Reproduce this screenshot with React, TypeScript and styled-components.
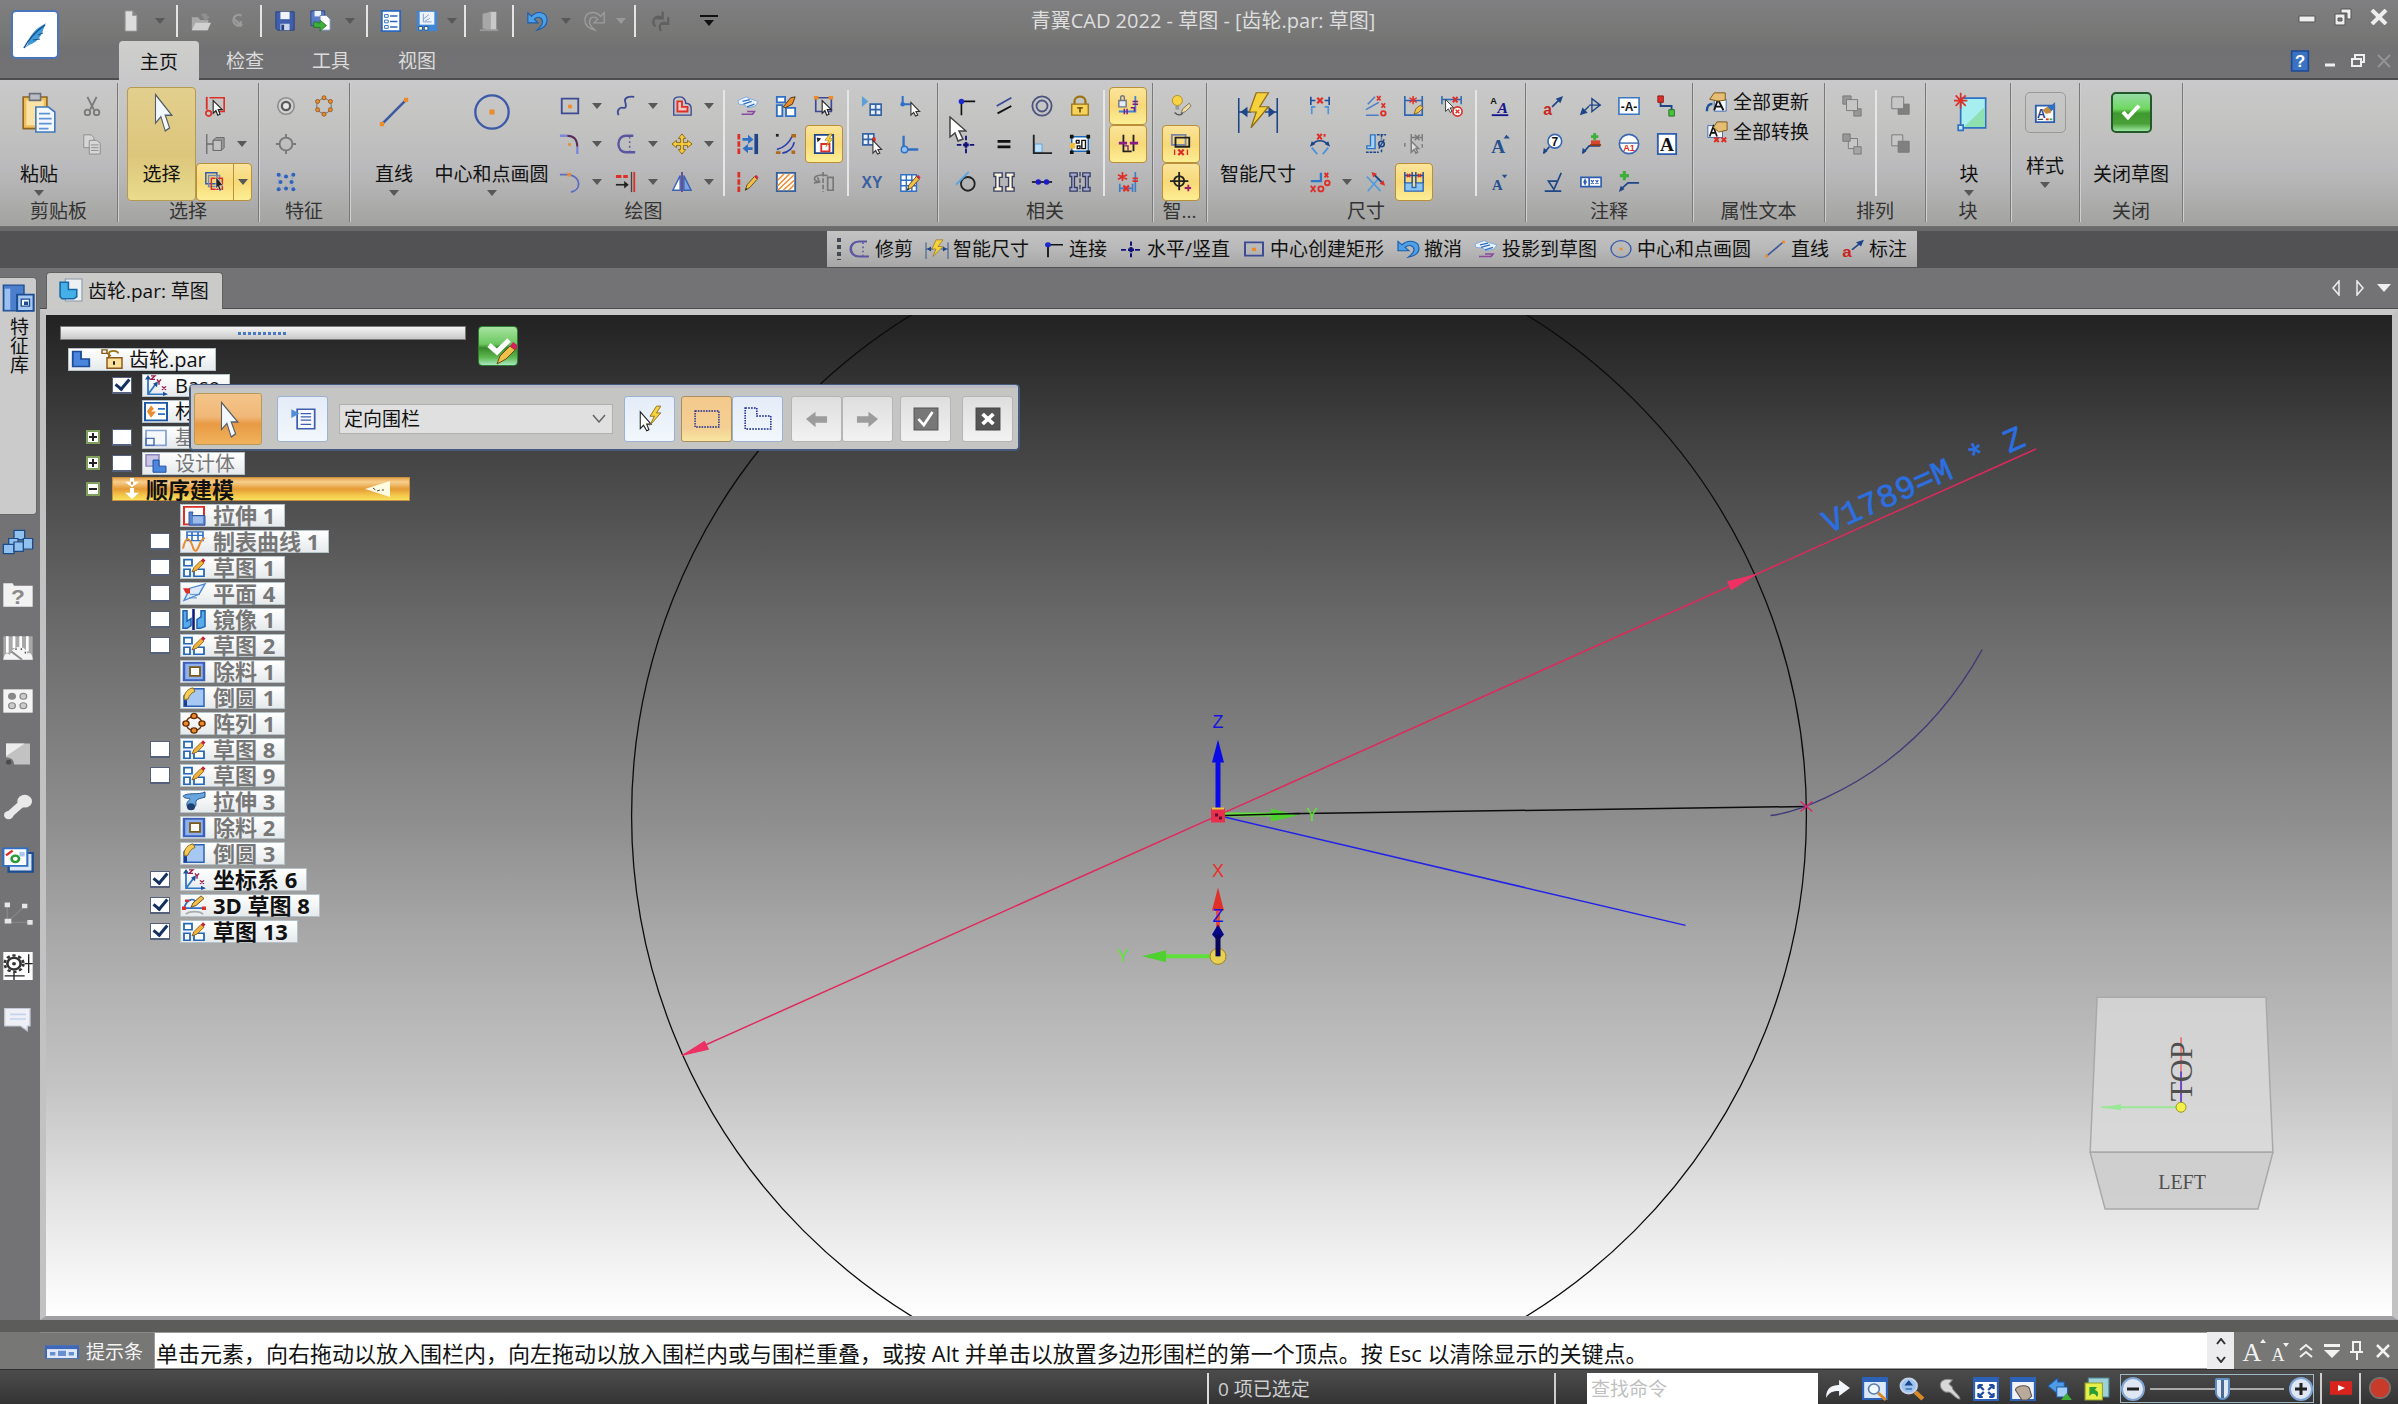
import React, { ReactNode } from 'react';
import styled, { createGlobalStyle, css } from 'styled-components';

const NAVY = '#1d4587';
const BLUE = '#2f6fc4';
const RED = '#dd2f28';
const INK = '#3d4a94';
const ORANGE = '#ec8b2c';

const GlobalStyle = createGlobalStyle`
  * { box-sizing: border-box; }
  html, body { margin: 0; padding: 0; }
  body {
    background: #333;
    font-family: "Open Sans", "Noto Sans CJK SC", sans-serif;
    font-size: 19px;
    line-height: 24px;
    color: #111;
  }
  button, input, select { font: inherit; color: inherit; }
  button { margin: 0; padding: 0; border: 0; background: none; cursor: default; }
`;

/* ---------- icons (24 x 24 grid) ---------- */

const pencil = (
  <g>
    <path d="M9 21l2-6 8-9 3 3-8 9z" fill="#f0c04a" stroke="#6b4a12" strokeWidth="1" />
    <path d="M19 6l3 3 1.500-2-2.500-3z" fill="#d2234a" />
    <path d="M9 21l.8-2.500 1.700 1.200z" fill="#222" />
  </g>
);
const cursor = <path d="M10 6v14l3-3 2 5 2.500-1-2-5h4.500z" fill="#fff" stroke="#222" strokeWidth="1.200" />;
const sketch = (
  <g>
    <path d="M2 3h8v7H2zM2 14h6v8H2zM12 14h10v8H12z" fill="#fff" stroke="#2468b8" strokeWidth="1.800" />
    <path d="M10 17l2-5 7-8 3 3-7 8z" fill="#f0b43a" stroke="#7a4b10" strokeWidth=".8" />
    <path d="M19 4l2-2.500 2.500 2.500-2 2.500z" fill="#c8202e" />
  </g>
);
const txt = (x: number, y: number, s: string, fill: string, size: number, serif = false) => (
  <text x={x} y={y} fill={fill} fontSize={size} fontWeight={700} textAnchor="middle" fontFamily={serif ? '"Liberation Serif", serif' : '"Liberation Sans", sans-serif'}>{s}</text>
);

const glyphs: Record<string, ReactNode> = {
  page: <path d="M5 1h9l5 5v17H5zM14 1v5h5" fill="#dcdcdc" stroke="#9a9a9a" />,
  open: <g><path d="M2 8h7l2 3h9v11H2z" fill="#a9a9a9" /><path d="M2 22l4-8h17l-4 8z" fill="#d0d0d0" /><path d="M12 6c2-4 7-3 7 1h3l-5 5-4-5h3" fill="#909090" /></g>,
  sync: <path d="M18 5a7 7 0 1 0 1 11M9 10l8 8M17 12v6h-6" fill="none" stroke="#9b9b9b" strokeWidth="3" />,
  save: <g><path d="M2 2h20v20H4l-2-2z" fill="#3f5fae" stroke="#26407f" /><path d="M7 2h10v8H7z" fill="#f1f4fa" /><path d="M7 15h10v7H7z" fill="#c9d3ea" /><path d="M8 16h3v6H8z" fill="#26407f" /></g>,
  saveAs: <g><path d="M1 1h15v16H1z" fill="#5a7cc8" stroke="#2c4688" /><path d="M5 1h7v6H5z" fill="#eef2fa" /><path d="M11 6h7l4 4v12H11z" fill="#fff" stroke="#6a86b8" /><path d="M4 13v6h7v4l7-6-7-6v3H8v-1z" fill="#3fae3a" stroke="#1c6e1c" strokeWidth=".8" /></g>,
  list: <g><path d="M2 1h20v22H2z" fill="#fff" stroke="#2a67bd" strokeWidth="2" /><path d="M5 5h4v3H5zM5 11h4v3H5zM5 17h4v3H5z" fill="none" stroke="#2a67bd" /><path d="M11 6.500h8M11 12.500h8M11 18.500h8" stroke="#2a67bd" strokeWidth="1.800" /></g>,
  image: <g><path d="M1 1h22v22H1z" fill="#3f86d8" /><path d="M4 2h16v14H4z" fill="#eef3fa" /><path d="M8 4v9h9M8 10l6-5M10 12l5-3" stroke="#7d9cc8" fill="none" /><path d="M3 18h4v4H3zM9 18h4v4H9z" fill="#fff8c0" stroke="#1c4c92" /></g>,
  door: <g><path d="M12 2h8v20h-8z" fill="#c9c9c9" /><path d="M5 4l9-2v21l-9-3z" fill="#a7a7a7" /><path d="M2 22h20" stroke="#999" strokeWidth="2" /></g>,
  undo: <path d="M2 3v11h11L9 10c4-4 9-2 9 3 0 4-3 6-6 9 8-2 11-6 11-11C23 2 12 0 6 7z" fill="#4ea0e6" stroke="#1a5dab" strokeWidth="1.200" />,
  redo: <path d="M22 3v11H11l4-4c-4-4-9-2-9 3 0 4 3 6 6 9C4 20 1 16 1 11 1 2 12 0 18 7z" fill="none" stroke="#9c9c9c" strokeWidth="1.500" />,
  redoAll: <path d="M16 2v7H9M16 9C8 4 3 12 8 18M22 8v7h-7M22 15c-8-3-11 2-8 8" fill="none" stroke="#606060" strokeWidth="2.500" />,
  help: <g><path d="M2 0h20v24H2z" fill="#3b73c4" stroke="#1d4a92" strokeWidth="2" />{txt(12, 19, '?', '#fff', 20)}</g>,

  paste: <g><path d="M2 3h15v19H2z" fill="#f0bd58" stroke="#8a6420" /><path d="M4 5h11v15H4z" fill="#fbe3a6" /><path d="M6 1h7v4H6z" fill="#b9bec6" stroke="#6c7078" /><path d="M10 9h8l4 3v12H10z" fill="#f3f8ff" stroke="#3f78bd" /><path d="M12 13h7M12 16h8M12 19h8M12 22h6" stroke="#5c94d6" /></g>,
  cut: <g fill="none" stroke="#7a7a7a" strokeWidth="2"><path d="M7 2l7 14M17 2l-7 14" /><circle cx="7" cy="19" r="3" /><circle cx="17" cy="19" r="3" /></g>,
  copy: <g fill="#d6d6d6" stroke="#8a8a8a"><path d="M3 2h8l3 3v11H3z" /><path d="M9 8h8l4 3v12H9z" /><path d="M11 13h8M11 16h8M11 19h8" /></g>,
  pointer: <path d="M6 1v18l5-4 4 9 4-2-4-8h6z" fill="#f2f8fd" stroke="#555e68" strokeWidth="1" />,
  selBox: <g><path d="M6 3h16v15H10" fill="none" stroke={RED} strokeWidth="1.800" /><path d="M3 2v14" stroke={RED} strokeWidth="2" /><circle cx="5" cy="20" r="3" fill="none" stroke={RED} strokeWidth="1.800" />{cursor}</g>,
  selPlane: <g><path d="M3 1v22M3 12h8" stroke="#6f6f6f" strokeWidth="1.500" /><path d="M10 8l3-3h9v11l-3 3h-9z" fill="#9a9a9a" stroke="#666" /><path d="M10 8h9v11h-9z" fill="#c2c2c2" stroke="#666" /></g>,
  selStack: <g fill="none" strokeWidth="1.600"><path d="M2 2h12v12H2z" stroke="#2c5faf" /><path d="M5 5h12v12H5z" stroke="#7a8bb0" /><path d="M8 8h12v12H8z" stroke={RED} /><path d="M13 6v14l2-3 2 5 2-1-2-5h4z" fill="#222" stroke="#fff" strokeWidth=".6" /></g>,
  hole: <g fill="none"><circle cx="12" cy="12" r="9" stroke="#8e8e8e" strokeWidth="1.800" fill="#d2d2d2" /><circle cx="12" cy="12" r="4.500" stroke="#5a5a5a" strokeWidth="2.500" fill="#e6e6e6" /></g>,
  ringDots: <g fill={ORANGE} stroke="#8a4a10" strokeWidth=".8"><circle cx="12" cy="12" r="8" fill="none" stroke="#555" />{[[12, 3], [19, 7], [19, 16], [12, 21], [5, 16], [5, 7]].map(([x, y]) => <circle key={`${x}-${y}`} cx={x} cy={y} r="2.200" />)}</g>,
  ring: <g fill="none" stroke="#777" strokeWidth="2"><circle cx="12" cy="12" r="7" /><path d="M12 1v4M12 19v4M1 12h4M19 12h4" /></g>,
  gridDots: <g fill="#2f63bd"><path d="M5 5l-2 7 2 6 7 1 6-1 2-6-2-7-6 3z" fill="none" stroke="#7ba0d8" strokeDasharray="2 2" />{[[4, 4], [12, 6], [20, 4], [6, 12], [18, 12], [4, 20], [12, 19], [20, 20]].map(([x, y]) => <circle key={`${x}-${y}`} cx={x} cy={y} r="2.200" />)}</g>,

  line: <g><path d="M4 20L20 4" stroke="#3d5a9e" strokeWidth="1.800" /><path d="M2 19h3v3H2zM19 2h3v3h-3z" fill={ORANGE} /></g>,
  circle: <g><circle cx="12" cy="12" r="10" fill="none" stroke="#3c5aa8" strokeWidth="1.400" /><path d="M10.500 10.500h3v3h-3z" fill={ORANGE} /></g>,
  rect: <g><path d="M3 4h18v16H3z" fill="none" stroke={INK} strokeWidth="2" /><path d="M10 10.500h4v4h-4z" fill={ORANGE} /></g>,
  curve: <path d="M4 22c-3-6 2-9 5-8 4 1 3-4 2-7-1-4 4-6 10-5" fill="none" stroke={INK} strokeWidth="2" />,
  offset: <g><path d="M3 22V6c0-3 3-4 7-4s6 4 6 7c5 0 6 3 6 6v7z" fill="none" stroke={INK} strokeWidth="1.500" /><path d="M7 18V7h5v6h6v5z" fill="#f6c6c0" stroke={RED} strokeWidth="2" /></g>,
  fillet: <g fill="none"><path d="M1 3h8M20 15v8" stroke="#7c86d8" strokeWidth="2.500" /><path d="M9 3c7 0 11 4 11 12" stroke="#5a2a58" strokeWidth="2" /><path d="M10 11h3v3h-3z" fill={ORANGE} /></g>,
  trim: <g fill="none" stroke="#5a57a0" strokeWidth="2.600"><path d="M20 3h-8C1 3 1 21 12 21h10" /><path d="M16 4v16" strokeDasharray="2 3" strokeWidth="1.600" /></g>,
  move: <path d="M12 1l4 5h-2.500v4.500H18V8l5 4-5 4v-2.500h-4.500V18H16l-4 5-4-5h2.500v-4.500H6V16l-5-4 5-4v2.500h4.500V6H8z" fill="#f7cf3e" stroke="#8a6414" />,
  arc: <g fill="none"><path d="M1 4h10M11 4c14 3 13 17 2 19" stroke="#5c6cc0" strokeWidth="2" /><path d="M9 2h4v4H9z" fill={ORANGE} /></g>,
  extend: <g><path d="M1 6h6M9 6h5" stroke={RED} strokeWidth="3.500" /><path d="M1 15h11" stroke="#222" strokeWidth="1.800" /><path d="M10 11l5 4-5 4z" fill="#222" /><path d="M18 1v22" stroke="#444" strokeWidth="1.500" /><path d="M21 1v22" stroke={RED} strokeWidth="2" /></g>,
  mirror: <g><path d="M2 21L10 5v16z" fill="#fff" stroke="#3961b4" strokeWidth="1.500" /><path d="M22 21L14 5v16z" fill="#7ca2e0" stroke="#3961b4" strokeWidth="1.500" /><path d="M12 1v22" stroke="#5a3a90" strokeWidth="1.800" /></g>,

  project: <g><path d="M1 6l9-4 4 2 9 3-3 5-8 2-3-3-7-1z" fill="#eaf3fd" stroke="#7ea8d8" /><path d="M6 7l8-2M7 10l9-3M11 13l8-3" stroke={BLUE} strokeWidth="1.400" /><path d="M5 21h12l2-3h-8" fill="none" stroke="#8a4aa0" strokeWidth="1.800" /></g>,
  include: <g><path d="M2 2h9v6H2zM2 11h6v12H2zM12 14h10v9H12z" fill="#fff" stroke={BLUE} strokeWidth="2" /><path d="M9 13l8-10 5-1-3 8-8 4z" fill={ORANGE} stroke="#4a3010" /></g>,
  selSketch: <g><path d="M3 3h17v15H3z" fill="none" stroke={INK} strokeWidth="1.800" /><path d="M1 1h5v4H1zM17 1h5v4h-5z" fill={ORANGE} />{cursor}</g>,
  stretch: <g><path d="M2 1v22" stroke={RED} strokeWidth="3" strokeDasharray="6 2" /><path d="M21 1v22" stroke={NAVY} strokeWidth="4" /><path d="M6 7h9M17 17H9" stroke={BLUE} strokeWidth="3" /><path d="M12 2l6 5-6 5zM12 12l-6 5 6 5z" fill={BLUE} /></g>,
  morph: <g fill="none" stroke="#2a3fae" strokeWidth="1.800"><path d="M2 18C10 16 16 10 19 3M8 22c7-1 12-6 13-12" /><path d="M1 1h3v3H1z" fill="#222" stroke="none" /><path d="M18 1h5v4h-5zM1 20h5v3H1zM18 19h4v4h-4z" fill="#b06a18" stroke="none" /></g>,
  relBox: <g><path d="M2 2h20v20H2z" fill="#fff" stroke={NAVY} strokeWidth="2" /><path d="M4 5l5 1-4 4z" fill="#222" /><path d="M9 12h9v8H9z" fill="none" stroke={RED} strokeWidth="2" /><path d="M18 1l-5 7h4l-3 7 8-9h-4l3-5z" fill="#f5d23c" stroke="#8a6a1a" strokeWidth=".6" /></g>,
  dashEdit: <g><path d="M2 1v22" stroke={RED} strokeWidth="3" strokeDasharray="6 2" />{pencil}</g>,
  hatch: <g><path d="M2 2h20v20H2z" fill="#fff" stroke="#355f9c" strokeWidth="2" /><path d="M3 10l7-7M3 16L16 3M3 21L21 4M9 21L21 10M15 21l6-6" stroke={ORANGE} strokeWidth="1.600" /></g>,
  rotateGray: <g fill="none" stroke="#777" strokeWidth="1.800"><path d="M11 1v22" strokeDasharray="5 2" /><path d="M8 12c-6 0-8-4-5-6s8-2 13-1M1 13l6-1-2-5" /><path d="M16 7h6v14h-6z" /></g>,
  gridPlay: <g><path d="M1 1l7 6-7 6z" fill="#5c9ed8" /><path d="M10 10h12v12H10zM16 10v12M10 16h12" fill="#eaf1fb" stroke="#3464a6" strokeWidth="1.800" /></g>,
  originPick: <g><path d="M4 1v9h10" fill="none" stroke={BLUE} strokeWidth="2.200" /><circle cx="4" cy="10" r="2.500" fill={BLUE} /><path d="M13 8v14l3-3 2 4 2.500-1-2-4h4z" fill="#fff" stroke="#333" strokeWidth="1.200" /></g>,
  gridPick: <g><path d="M2 1h12v12H2zM8 1v12M2 7h12" fill="#eaf1fb" stroke="#3464a6" strokeWidth="1.800" /><path d="M12 5h4v4h-4z" fill={RED} /><path d="M13 8v14l3-3 2 4 2.500-1-2-4h4z" fill="#fff" stroke="#333" strokeWidth="1.200" /></g>,
  origin: <g><path d="M5 3v15h16" fill="none" stroke={BLUE} strokeWidth="2.500" /><circle cx="6" cy="18" r="3.500" fill="#8ec3f3" stroke={BLUE} strokeWidth="1.500" /></g>,
  xy: txt(12, 18, 'XY', '#3a5ea2', 17),
  gridEdit: <g><path d="M2 4h17v18H2zM8 4v18M14 4v18M2 10h17M2 16h17" fill="#fff" stroke={BLUE} strokeWidth="1.600" />{pencil}</g>,

  connect: <g><path d="M7 22V7h15" fill="none" stroke="#111" strokeWidth="1.800" /><circle cx="7" cy="7" r="3" fill="#1a2acb" /></g>,
  parallel: <g><path d="M4 12L20 3" stroke={INK} strokeWidth="2" /><path d="M5 20l15-8" stroke="#111" strokeWidth="2" /></g>,
  concentric: <g fill="none" stroke="#4e5480" strokeWidth="2"><circle cx="12" cy="12" r="10.500" /><circle cx="12" cy="12" r="6" /></g>,
  lock: <g><path d="M6 11V7c0-7 12-7 12 0v4" fill="none" stroke="#9a7414" strokeWidth="2.500" /><path d="M3 10h18v12H3z" fill="#f6d45a" stroke="#9a7414" strokeWidth="1.500" /><path d="M9 14h6M12 14v5" stroke="#7a5a10" strokeWidth="2" /></g>,
  horiz: <g stroke="#10107a" strokeWidth="2"><path d="M12 3v20" strokeDasharray="5 2" /><path d="M2 13h20" strokeDasharray="5 2" /><path d="M9 13h6M12 10v6" strokeWidth="3" /></g>,
  equal: <path d="M5 9h14M5 15h14" stroke="#111" strokeWidth="3" />,
  perp: <g><path d="M4 12h8v9H4z" fill="#bfe0fa" stroke="#53a0e0" /><path d="M3 2v20h20" fill="none" stroke="#222" strokeWidth="2" /></g>,
  rigid: <g><path d="M3 4h18v16H3z" fill="#fff" stroke="#1a6ab8" strokeWidth="1.600" /><path d="M1 2h4v4H1zM19 2h4v4h-4zM1 19h4v4H1zM19 19h4v4h-4z" fill="#111" /><path d="M14 8h4v9h-4zM8 8h3v3H8zM9 14h3v3H9z" fill="none" stroke="#111" strokeWidth="1.500" /><path d="M1 11h6v6H1z" fill="#f0be3a" /></g>,
  tangent: <g><circle cx="14" cy="14" r="7.500" fill="none" stroke="#222" strokeWidth="2" /><path d="M1 15L15 1" stroke="#58a6e6" strokeWidth="2" /></g>,
  symm: <g fill="#fff6dc" stroke="#333c62" strokeWidth="1.500"><path d="M1 2h9v5H7v10h3v5H1V18h2V6H1z" /><path d="M23 2h-9v5h3v10h-3v5h9v-4h-2V6h2z" /></g>,
  collinear: <g><path d="M1 12h22" stroke="#111" strokeWidth="1.800" /><circle cx="8" cy="12" r="3" fill="#1a1acb" /><circle cx="17" cy="12" r="3" fill="#1a1acb" /></g>,
  symmAxis: <g fill="#a9acd0" stroke="#333c62" strokeWidth="1.400"><path d="M1 2h8v4H6v12h3v4H1v-4h2V6H1z" /><path d="M23 2h-8v4h3v12h-3v4h8v-4h-2V6h2z" /><path d="M12 1v22" strokeDasharray="5 2" /></g>,
  keepRel: <g><path d="M2 6h8v7H2z" fill="#e6edf8" stroke="#6b7686" strokeWidth="1.500" /><path d="M4 6V3c0-3 4-3 4 0v3" fill="none" stroke="#6b7686" strokeWidth="1.500" /><path d="M20 1v17H2" fill="none" stroke="#3f86d6" strokeWidth="2" /><path d="M17 7h6M17 10h6M8 15v6M11 15v6M15 14h4v4" fill="none" stroke="#7a1a8a" strokeWidth="1.600" /></g>,
  handles: <g fill="none"><path d="M7 2v18h9M18 2v18" stroke="#222" strokeWidth="2" /><path d="M2 11h9M14 11h9" stroke="#8a1a8a" strokeWidth="3" /><path d="M8 14h4v5" stroke="#7a1a8a" strokeWidth="1.500" /></g>,
  conflict: <g><path d="M20 1v22M3 14v9M17 14v9M3 19h14" stroke="#3f7cc8" strokeWidth="1.800" /><path d="M6 1v10M1 4l10 5M1 9l10-5M17 8h6M17 11h6" stroke={RED} strokeWidth="1.800" /><path d="M7 16l6 6M13 16l-6 6" stroke={RED} strokeWidth="2.500" /></g>,

  bulbEdit: <g><circle cx="8" cy="6" r="5.500" fill="#f8d348" stroke="#b28a1a" /><path d="M6 12h4v4H6z" fill="#999" /><path d="M5 19c4 4 8 3 9 0" fill="none" stroke="#555" strokeWidth="1.500" /><path d="M12 20l2-5 7-6 2 3-6 6z" fill="#f6dc9a" stroke="#555" strokeWidth=".8" /></g>,
  overlap: <g fill="none" strokeWidth="2"><path d="M2 2h15v11H2z" stroke="#7b85a8" /><path d="M6 5h15v10H6z" stroke="#222" /><path d="M5 18v6M19 18v6" stroke={RED} strokeWidth="1.500" /><path d="M9 18l6 6M15 18l-6 6" stroke={RED} strokeWidth="2.500" /></g>,
  target: <g fill="none" stroke="#222" strokeWidth="2"><circle cx="10" cy="11" r="5.500" /><path d="M10 1v20M0 11h20" /><path d="M20 15v7M16 18.500h7" stroke="#a01a6a" /></g>,

  smartDim: <g><path d="M1 4v20M23 4v20M1 12h7M16 12h7" stroke={NAVY} strokeWidth=".9" fill="none" /><path d="M2 12l4-3v6zM22 12l-4-3v6z" fill={NAVY} /><path d="M11 1L7 12h4l-3 9 10-12h-5l5-8z" fill="#f5d23c" stroke="#8f6c14" strokeWidth=".7" /></g>,
  hdim: <g><path d="M2 2v9M22 2v9M2 6h5M17 6h5" stroke="#1f4f9a" strokeWidth="1.800" /><path d="M3 21v-8h4M21 21v-8h-4" fill="none" stroke="#4d94da" strokeWidth="1.800" /><path d="M9 3l6 6M15 3L9 9" stroke={RED} strokeWidth="2.500" /></g>,
  adim: <g><path d="M9 1l5 6M14 1L9 7M17 1v3" stroke={RED} strokeWidth="2.200" /><path d="M3 13C8 7 16 7 21 13" fill="none" stroke={NAVY} strokeWidth="1.800" /><path d="M1 15l2-6 4 3zM23 15l-2-6-4 3z" fill={NAVY} /><path d="M3 16l6 7M21 16l-6 7" stroke="#4d94da" strokeWidth="2" /></g>,
  coord: <g><path d="M2 11h11V2" fill="none" stroke="#2f78c8" strokeWidth="2.500" /><path d="M17 2l4 5M21 2l-4 5M2 16l5 7M7 16l-5 7" stroke={RED} strokeWidth="2" /><circle cx="20" cy="13" r="2.500" fill="none" stroke={RED} strokeWidth="2" /><circle cx="13" cy="19.500" r="2.800" fill="none" stroke={RED} strokeWidth="2" /></g>,
  multi: <g><path d="M1 22h14M1 16L15 8M3 10l8-8" stroke="#4a7ec4" strokeWidth="1.600" /><path d="M13 1l4 5M17 1l-4 5M18 9l4 5M22 9l-4 5" stroke={RED} strokeWidth="1.800" /><circle cx="20" cy="20" r="2.500" fill="none" stroke={RED} strokeWidth="2" /></g>,
  depth: <g><path d="M2 17V14h4V2h5v15z" fill="#a5d2f6" stroke="#2f74be" strokeWidth="1.500" /><path d="M13 2h10M18 2v5M18 18v4M1 21h14" stroke={NAVY} strokeWidth="1.600" strokeDasharray="3 1" /><circle cx="18" cy="12" r="3" fill="none" stroke={NAVY} strokeWidth="1.800" /><path d="M15 17l6-10" stroke={NAVY} strokeWidth="1.500" /></g>,
  xdist: <g><path d="M2 6l15 16M3 22L15 8" stroke="#4f9be0" strokeWidth="1.800" /><path d="M9 3l11 11" stroke={NAVY} strokeWidth="2" /><path d="M7 1l6 2-4 4zM22 16l-6-2 4-4z" fill={RED} /></g>,
  dimEdit: <g><path d="M2 1v21h19V1M2 6h19" fill="none" stroke="#2c66b4" strokeWidth="1.800" /><path d="M11 1v9M7 3l8 5M7 8l8-5" stroke={RED} strokeWidth="1.600" /><path d="M12 21l2-6 5-4 3 3-5 5z" fill="#f0c04a" stroke="#6b4a12" strokeWidth=".8" /></g>,
  dimSel: <g stroke="#7c7c7c" fill="none" strokeWidth="1.600"><path d="M9 1v8M21 1v8M9 5h12M13 2l5 6M18 2l-5 6M2 11v4M21 12v4" /><path d="M9 9v12l3-3 2 4 2-1-2-4h3z" fill="#e0e0e0" /></g>,
  pane: <g><path d="M2 13h8v5h4v-5h8v9H2z" fill="#8cc4f2" stroke="#2c66b4" strokeWidth="1.500" /><path d="M2 1v12M10 1v12M14 1v12M22 1v12M2 5h20" stroke="#1f4f9a" strokeWidth="1.600" /><path d="M4 3l4 4M8 3L4 7M16 3l4 4M20 3l-4 4" stroke={RED} strokeWidth="1.400" /></g>,
  delDim: <g><path d="M1 1v9M22 1v9M1 5h21" stroke="#2c66b4" strokeWidth="1.600" /><path d="M13 2l5 6M18 2l-5 6" stroke={RED} strokeWidth="2.200" /><path d="M5 5v13l3-3 2 4 2-1-2-4h4z" fill="#fff" stroke="#333" /><circle cx="18" cy="18" r="5" fill="#fff" stroke={RED} strokeWidth="1.800" /><path d="M16 16l4 4M20 16l-4 4" stroke={RED} strokeWidth="1.500" /></g>,
  fontAA: <g>{txt(5, 10, 'A', '#111', 10)}<text x="15" y="20" fontSize="17" fontWeight="700" fontStyle="italic" textAnchor="middle" fill="#16168c" fontFamily='"Liberation Serif", serif'>A</text><path d="M3 22h18" stroke="#16168c" strokeWidth="2" /></g>,
  fontUp: <g>{txt(10, 22, 'A', '#24508f', 21, true)}<path d="M16 6l3-4 4 4z" fill="#24508f" /></g>,
  fontDown: <g>{txt(9, 21, 'A', '#24508f', 16, true)}<path d="M14 4h6l-3 4z" fill="#24508f" /></g>,

  leader: <g>{txt(6, 22, 'a', '#c8241c', 17)}<path d="M11 13l8-8" stroke={NAVY} strokeWidth="1.800" /><path d="M23 1l-3 8-5-5z" fill={NAVY} /></g>,
  weldSym: <g fill="none" stroke={NAVY} strokeWidth="1.500"><path d="M2 20l8-8M10 11h13M13 4v14l9-7z" /><path d="M1 21l2-6 4 4z" fill={NAVY} /></g>,
  datum: <g><path d="M1 3h22v18H1z" fill="#fff" stroke="#3a78c4" strokeWidth="1.800" />{txt(12, 17, '-A-', '#111', 13)}</g>,
  connector: <g><path d="M5 5v7h12v8" fill="none" stroke={NAVY} strokeWidth="2" /><path d="M2 1h6v7H2z" fill={RED} stroke="#8a1a14" /><path d="M14 16h6v7h-6z" fill="#4ac43e" stroke="#1c6e1c" /></g>,
  balloon: <g><path d="M8 15l-6 7" stroke={NAVY} strokeWidth="1.800" /><path d="M1 23l1-7 4 4z" fill={NAVY} /><circle cx="14" cy="9" r="7.500" fill="#fff" stroke="#3a68b4" strokeWidth="1.800" />{txt(14, 14, '7', '#111', 13)}</g>,
  edgeCond: <g><path d="M3 22l7-8h12" fill="none" stroke={NAVY} strokeWidth="1.800" /><path d="M2 23l1-7 4 4z" fill={NAVY} /><path d="M12 8h10v5H12z" fill="#d8442c" /><path d="M11 13h12" stroke="#9a3a1a" strokeWidth="2" /><path d="M16 0v8M12 4h8" stroke="#3fae3a" strokeWidth="3" /></g>,
  a1: <g><circle cx="12" cy="12" r="10.500" fill="#fff" stroke="#3a68b4" strokeWidth="1.800" /><path d="M2 11h20" stroke="#3a68b4" strokeWidth="1.500" />{txt(12, 20, 'A1', RED, 10)}</g>,
  textA: <g><path d="M2 1h20v22H2z" fill="#fff" stroke="#2c5daf" strokeWidth="2" />{txt(12, 20, 'A', '#111', 21, true)}</g>,
  surface: <path d="M7 11h10l-4 9zM13 20l8-18M3 22h18" fill="none" stroke={NAVY} strokeWidth="1.800" />,
  fcf: <g><path d="M1 7h22v10H1zM10 7v10" fill="#fff" stroke="#2c5daf" strokeWidth="1.800" /><path d="M5.500 8l2 4-2 4-2-4z" fill="#2c5daf" /><path d="M12 10l3 4M15 10l-3 4M17 10l3 4M20 10l-3 4" stroke="#2c5daf" strokeWidth="1.300" /></g>,
  callout: <g><path d="M3 20l8-7h12" fill="none" stroke={NAVY} strokeWidth="1.800" /><path d="M1 23l2-7 4 4z" fill={NAVY} /><path d="M7 0v10M2 5h10" stroke="#3fae3a" strokeWidth="3.500" /></g>,
  updAll: <g><path d="M9 9h13v13H9z" fill="#f4f7fb" stroke="#3a68b4" /><path d="M9 21l4-12 6 12M11 17h6" fill="none" stroke="#111" strokeWidth="2" /><path d="M4 9l5-7h12v8l-8 1z" fill="#e6bd74" stroke="#7a5212" /><path d="M1 22c0-6 2-8 6-8" fill="none" stroke="#1f4f9a" strokeWidth="2.500" /></g>,
  cvtAll: <g><path d="M2 5h16v13H2z" fill="#f4f7fb" stroke="#3a68b4" /><path d="M4 17L8 6l4 11M6 13h5" fill="none" stroke="#111" strokeWidth="1.800" /><path d="M8 7l4-6h11v9l-9 2z" fill="#e6bd74" stroke="#7a5212" /><path d="M9 18l5 5M14 18l-5 5M17 18l5 5M22 18l-5 5" stroke={RED} strokeWidth="2.200" /></g>,
  front: <g fill="#c6c6c6" stroke="#777"><path d="M2 1h9v9H2z" fill="#979797" /><path d="M14 15h8v8h-8z" fill="#979797" /><path d="M6 5h12v12H6z" /></g>,
  forward: <g fill="#c6c6c6" stroke="#777"><path d="M10 10h12v11H10z" fill="#808080" /><path d="M3 2h13v13H3z" /></g>,
  back: <g fill="#c6c6c6" stroke="#777"><path d="M8 6h10v11H8z" /><path d="M2 1h8v8H2z" fill="#979797" /><path d="M14 15h8v8h-8z" fill="#a5a5a5" /></g>,
  backward: <g fill="#c6c6c6" stroke="#777"><path d="M3 2h12v12H3z" /><path d="M10 9h12v12H10z" fill="#808080" /></g>,
  block: <g><path d="M7 4h15v17H7z" fill="#a6eef0" stroke={BLUE} /><path d="M21.500 9v11.500H9z" fill="#8fe0b0" /><path d="M5.500 19.500h3v3h-3z" fill="#bfe6ff" stroke={BLUE} /><path d="M7 1v9M3 5.500h8M4 2.500l6 6M10 2.500l-6 6" stroke={RED} strokeWidth="1" /></g>,
  styles: <g><path d="M2 5h20v18H2z" fill="#fff" stroke="#2c5daf" strokeWidth="2" />{txt(8, 18, 'A', '#1d3f92', 13)}<path d="M4 20h6" stroke="#111" /><path d="M13 19h3v2h-3z" fill={RED} /><path d="M17 19h3v2h-3z" fill="#3fae3a" /><path d="M9 10l6-4 6 1-3 6-5 1z" fill="#c58a3a" /><path d="M14 5h5l4-4v7l-4 3z" fill="#2f6fc4" /></g>,
  check: <path d="M4 12l5 6L20 5" fill="none" stroke="#fff" strokeWidth="4" />,

  part: <g><path d="M7 1h16v21H7z" fill="#eef1f4" stroke="#8a98a8" /><path d="M2 4h8v7h8v7l-3 2H4l-2-2z" fill="#45b0e6" stroke="#1667a8" strokeWidth="1.500" /></g>,
  partSmall: <path d="M3 3h9v9h9v9H3z" fill="#4b86de" stroke="#1c4c9a" strokeWidth="2" />,
  lockKey: <g><path d="M2 1h5v4H2zM6 4l5 4" fill="none" stroke="#8a5a1c" strokeWidth="1.500" /><path d="M9 9V5c0-4 9-4 9 0" fill="none" stroke="#9a7414" strokeWidth="2" /><path d="M7 10h15v12H7z" fill="#fbe09a" stroke="#8a5a1c" strokeWidth="1.500" /><path d="M14 14v4" stroke="#222" strokeWidth="2" /></g>,
  axes: <g><path d="M4 2v20h18M4 22L12 10" fill="none" stroke="#2f78c8" strokeWidth="1.800" /><path d="M4 0l-3 5h6zM24 22l-5-3v5zM14 7l-5 3 4 4z" fill="#1f4f9a" /><path d="M7 1h4L7 5h4M13 5l2 3 2-3M15 8v3M18 13l4 4M22 13l-4 4" fill="none" stroke="#9a1a4a" strokeWidth="1.400" /></g>,
  material: <g><path d="M1 2h22v20H1z" fill="#fff" stroke="#1c5aa8" strokeWidth="2" /><path d="M7 5l3 4-3 3h5l-5 7-4-7z" fill={ORANGE} /><path d="M14 9h7M14 15h7" stroke={BLUE} strokeWidth="2" /></g>,
  plane: <g><path d="M2 4h20v17H2z" fill="#f5f8fc" stroke="#8aa4d0" strokeWidth="1.800" /><path d="M2 13h8v8H2z" fill="none" stroke="#4a6fb8" strokeWidth="1.500" /></g>,
  body: <g><path d="M2 2h13v13H2z" fill="#c9c6e8" stroke="#8a86b8" strokeWidth="1.500" /><path d="M9 8h6v7h7v7H9z" fill="#4b86de" stroke="#1c4c9a" /></g>,
  arrows: <g fill="#fff"><path d="M10 0h4v4h5l-7 6-7-6h5zM10 11h4v5h5l-7 7-7-7h5z" /><path d="M11 4h2v3h-2z" fill={ORANGE} /></g>,
  extrude: <g><path d="M2 2h20v20H2z" fill="#fff" stroke={RED} strokeWidth="2" /><path d="M7 8h4l-1 4h13v11H7z" fill="#5b86d0" stroke="#2c4f9c" /><path d="M11 13h10v8H11z" fill="#9dbcea" /></g>,
  tableCurve: <g><path d="M5 1h16v10H5zM5 5h16M10 1v10M16 1v10" fill="#fff" stroke={BLUE} strokeWidth="1.600" /><path d="M1 20C4 4 8 8 11 19c2 6 4 4 6-2s3-8 6-9" fill="none" stroke={ORANGE} strokeWidth="2" /></g>,
  sketch,
  refPlane: <g><path d="M2 20L8 6l15-5-6 12z" fill="#dceafa" stroke="#4f8ad0" strokeWidth="1.500" /><path d="M8 13h10M7 17h8" stroke="#4f8ad0" /><path d="M1 6h7v6H4z" fill={RED} /></g>,
  mirrorFeat: <g><path d="M1 2h4v12l4-3v8l-4 3H1zM15 12l4-3V2h4v18l-5 2h-3z" fill="#5aa9e8" stroke="#1c62b0" strokeWidth="1.500" /><path d="M11.500 0v24" stroke="#0a1a7a" strokeWidth="2.500" /></g>,
  cutFeat: <g><path d="M2 2h20v20H2z" fill="#8fb0ee" stroke="#3c5fb8" strokeWidth="2.500" /><path d="M8 7h10v10H8z" fill="#fff" stroke="#7a5a14" strokeWidth="1.800" /></g>,
  round: <g><path d="M2 22V10l8-8h12v20z" fill="#a7c8f2" stroke="#2f62b4" strokeWidth="1.500" /><path d="M2 14C2 6 6 2 11 1l2 4C9 7 7 10 6 14z" fill="#f6cc58" stroke="#8a6414" /><path d="M2 15h3v7H2z" fill="#1d3f92" /></g>,
  pattern: <g fill={ORANGE} stroke="#6a3008" strokeWidth="1.500"><circle cx="12" cy="12" r="8" fill="none" /><circle cx="12" cy="3.500" r="3" /><circle cx="20" cy="12" r="3" /><circle cx="12" cy="20" r="3" /><circle cx="4" cy="12" r="3" /></g>,
  revolve: <g><path d="M1 6c4-5 16-1 22-5v6c-6 2-10 2-9 8 0 5-8 8-9 2s4-7 3-8-6 0-7-3z" fill="#6aa6de" stroke="#1f4f8a" /><circle cx="9" cy="18" r="4" fill="#1d3f72" /></g>,
  sketch3d: <g><path d="M2 15C6 1 14 5 14 9M2 15h20" fill="none" stroke={BLUE} strokeWidth="1.800" /><path d="M4 22c3-4 14-4 17 0" fill="none" stroke="#aaa" strokeWidth="2" /><path d="M0 13h4v4H0zM20 13h4v4h-4zM3 5h4v3H3z" fill={RED} /><path d="M9 14l2-5 8-8 3 3-8 8z" fill="#f0c04a" stroke="#6b4a12" /></g>,

  featLib: <g><path d="M1 1h15v22H1z" fill="#4b7fcb" stroke="#1c4c92" /><path d="M2 4h4v18H2z" fill="#9cc0f0" /><path d="M11 9h12v14H11z" fill="#a5c8f2" stroke="#1c4c92" strokeWidth="1.500" /><path d="M14 13h6v6h-6z" fill="#fff" stroke="#1c4c92" /><path d="M16 15h3v3h-3z" fill="#1c4c92" /></g>,
  blocks: <g fill="#8fc0ee" stroke="#1c4c8a"><path d="M9 2h8v8H9z" /><path d="M16 9h7v9h-7z" /><path d="M5 9h7v8H5z" /><path d="M1 14h8v8H1z" /><path d="M9 12h7v8H9z" /></g>,
  ask: <g><path d="M1 2h7l1 2h14v18H1z" fill="#f2f2f2" />{txt(12, 20, '?', '#8a8a8a', 17)}</g>,
  scene: <g><path d="M1 2h22v20H1z" fill="#a8a8a8" /><path d="M4 2v14M9 2v10M14 2v10M19 2v13" stroke="#fff" strokeWidth="2" /><path d="M1 22c1-6 3-6 5-4 2-9 12-9 13-1 2-2 4 1 4 5z" fill="#f4f4f4" /><path d="M7 15l8 7" stroke="#8a8a8a" strokeWidth="1.500" /><path d="M10 13h1M14 13h1M17 16h1" stroke="#555" strokeWidth="1.500" /></g>,
  holes: <g><path d="M1 2h22v20H1z" fill="#f4f4f4" /><g fill="#ccc" stroke="#888"><circle cx="7.500" cy="8" r="2.500" fill="#888" /><circle cx="16" cy="8" r="2.500" /><circle cx="7.500" cy="16" r="2.500" /><circle cx="16" cy="16" r="2.500" /></g></g>,
  corner: <g><path d="M3 3h18v18H9c0-4-2-6-6-6z" fill="#c2c2c2" /><path d="M3 3h14L3 14z" fill="#ececec" /><circle cx="5" cy="19" r="2" fill="#4c4c4c" /></g>,
  joint: <g fill="#e9e9e9"><circle cx="17" cy="7" r="5.500" /><circle cx="5" cy="19" r="3.500" /><path d="M12 8L4 16l4 4 8-8z" /></g>,
  layers: <g><path d="M5 6h18v16H5z" fill="#dce8f6" stroke="#1c4c92" strokeWidth="1.800" /><path d="M1 2h18v15H1z" fill="#fff" stroke="#2f6fc4" strokeWidth="1.600" /><circle cx="10" cy="11" r="2.800" fill="none" stroke="#2a9a34" strokeWidth="2" /><path d="M3 8l5-4" stroke={RED} strokeWidth="1.800" /><path d="M13 5h4v4h-4z" fill="#a8caf0" /></g>,
  nodes: <g><path d="M4 4v16h17M4 20L17 6" fill="none" stroke="#858585" /><path d="M2 3h4v4H2zM15 4h4v4h-4zM2 17h5v4H2zM19 18h4v4h-4z" fill="#e6e6e6" /></g>,
  gear: <g><path d="M1 0h22v24H1z" fill="#fff" /><circle cx="9" cy="10" r="5" fill="none" stroke="#333" strokeWidth="2" /><circle cx="9" cy="10" r="1.500" fill="#333" /><circle cx="9" cy="10" r="7" fill="none" stroke="#333" strokeWidth="2" strokeDasharray="2.500 2" /><path d="M20 2v16M17 10h6M2 20.500h15M9 18v6" stroke="#222" /></g>,
  chat: <g><path d="M2 3h19v15h-2v4l-5-4H2z" fill="#eef0f6" stroke="#c2c8d8" /><path d="M6 8h12M6 12h12" stroke="#c4d2ee" strokeWidth="1.500" /></g>,

  form: <g><path d="M7 3h15v18H7z" fill="#f8faff" stroke="#3d5fb0" strokeWidth="1.500" /><path d="M10 7h9M10 10h9M10 13h9M10 17h9" stroke="#3d5fb0" strokeWidth="1.200" /><path d="M2 3l7 4-7 4z" fill="#4f8fd8" /></g>,
  pickBolt: <g><path d="M3 6v15l3-3 3 5 2-1-2-5h4z" fill="#fff" stroke="#222" /><path d="M18 1l-6 9h4l-4 8 10-11h-4l4-6z" fill="#f5d23c" stroke="#8a6a1a" strokeWidth=".8" /></g>,
  fenceRect: <path d="M1 4h22v16H1z" fill="none" stroke="#1a2a92" strokeWidth="1.300" strokeDasharray="1.500 1" />,
  fencePoly: <path d="M1 1h10v8h12v13H1z" fill="none" stroke="#1a2a92" strokeWidth="1.300" strokeDasharray="1.500 1" />,
  arrowL: <path d="M1 12l10-8v5h12v7H11v5z" fill="#9c9c9c" />,
  arrowR: <path d="M23 12L13 4v5H1v7h12v5z" fill="#9c9c9c" />,
  okBox: <g><path d="M1 1h22v22H1z" fill="#777" stroke="#555" /><path d="M5 12l5 6 8-13" fill="none" stroke="#fff" strokeWidth="2.500" /></g>,
  xBox: <g><path d="M1 1h22v22H1z" fill="#555" stroke="#444" /><path d="M7 7l10 10M17 7L7 17" stroke="#fff" strokeWidth="3.500" /></g>,

  hint: <g><path d="M0 1h24v22H0z" fill="#dfe8f8" stroke="#3f68b8" strokeWidth="1.500" /><path d="M0 1h24v6H0z" fill="#3f68b8" /><path d="M3 12h4v6H3zM9 10h6v9H9zM17 12h4v6h-4z" fill="#6a8fd0" /></g>,
  share: <path d="M1 21C1 11 6 8 13 8V3l10 8-10 8v-5c-6 0-9 1-12 7z" fill="#f2f6fb" />,
  zoomArea: <g><path d="M1 1h22v21H1z" fill="#dce9fa" stroke="#2c62b8" strokeWidth="2" /><path d="M1 1h22v4H1z" fill="#2c62b8" /><circle cx="11" cy="12" r="5" fill="#f2f8ff" stroke="#5a7ca8" strokeWidth="1.500" /><path d="M15 16l7 7" stroke="#d88a28" strokeWidth="3" /></g>,
  zoom: <g><circle cx="9" cy="9" r="7.500" fill="#9cc4f2" stroke="#c6d2e6" strokeWidth="2" /><path d="M9 4l3 4H6zM6 12h6" fill={NAVY} stroke={NAVY} /><path d="M15 15l7 7" stroke="#d88a28" strokeWidth="4" /></g>,
  zoomTool: <path d="M4 8c0-5 6-7 11-5l-3 4 3 3c-1 3 8 9 7 12-3 1-8-8-11-7S4 12 4 8z" fill="#d8d8d8" stroke="#888" />,
  fit: <g><path d="M1 1h22v22H1z" fill="#fff" stroke="#2c62b8" strokeWidth="2" /><path d="M1 1h22v4H1z" fill="#2c62b8" /><path d="M5 8h4M5 8v4M5 8l5 5M19 8h-4M19 8v4M19 8l-5 5M5 20h4M5 20v-4M5 20l5-5M19 20h-4M19 20v-4M19 20l-5-5" stroke="#1d4ba0" strokeWidth="2" /></g>,
  pan: <g><path d="M1 1h22v22H1z" fill="#f0f3f8" stroke="#2c62b8" strokeWidth="2" /><path d="M1 1h22v4H1z" fill="#2c62b8" /><path d="M5 13c1-5 12-6 13-1l2 7-4 4h-5z" fill="#b9aa9c" stroke="#5c5048" /></g>,
  viewCube: <g><path d="M1 9l9-8v4h6v8h-6v4z" fill="#4f9be6" stroke="#1c5aa8" /><path d="M9 10h10v10H9z" fill="#a3cdf6" stroke="#1c5aa8" /><path d="M18 16l5 7H13z" fill="#3fae3a" /></g>,
  refresh: <g><path d="M4 1h19v19H4z" fill="#9ed0d8" stroke="#4c8894" /><path d="M1 6h16v17H1z" fill="#e6ee4a" stroke="#93a02a" /><path d="M5 10h7l-2 3c3 1 4 4 2 7-1-3-3-4-5-3l-2 2z" fill="#2a9a34" /></g>,
  video: <g><path d="M1 3h22v18H1z" fill="#d8241c" /><path d="M9 8l7 4-7 4z" fill="#fff" /></g>,
  record: <g><circle cx="12" cy="12" r="11" fill="#7a7270" /><path d="M8 3h8l5 5v8l-5 5H8l-5-5V8z" fill="#c83a2a" /></g>,
};

const Glyph = styled.svg`
  display: block;
  overflow: visible;
`;
const Icon = ({ name, w = 24, h = 24 }: { name: string; w?: number; h?: number }) => (
  <Glyph width={w} height={h} viewBox="0 0 24 24" preserveAspectRatio="none" aria-hidden="true">{glyphs[name]}</Glyph>
);

const Triangle = styled.span<{ $tone?: string }>`
  display: block;
  width: 0;
  height: 0;
  border: 5px solid transparent;
  border-top: 6px solid ${(p) => p.$tone || '#585858'};
  border-bottom: 0;
`;

/* ---------- shell ---------- */

const Shell = styled.div`
  display: flex;
  flex-direction: column;
  min-height: 100vh;
  min-width: 2200px;
  background: #737375;
`;

const Header = styled.header`
  display: flex;
  height: 80px;
  background: linear-gradient(#7f7f81, #777776 45%, #717173 60%, #727274);
  border-bottom: 2px solid #4c4c4c;
`;
const LogoCell = styled.div`
  flex: 0 0 113px;
  padding: 10px 11px;
`;
const LogoButton = styled.button`
  display: grid;
  place-items: center;
  width: 48px;
  height: 49px;
  background: #fff;
  border: 2px solid #4a74bc;
  border-radius: 5px;
`;
const HeaderRows = styled.div`
  flex: 1;
  display: flex;
  flex-direction: column;
`;
const TitleRow = styled.div`
  display: flex;
  align-items: center;
  height: 42px;
`;
const QuickAccess = styled.div`
  display: flex;
  align-items: center;
  flex: 1 1 0;
`;
const QatButton = styled.button<{ $w: number }>`
  display: grid;
  place-items: center;
  width: ${(p) => p.$w}px;
  height: 36px;
`;
const QatLine = styled.span`
  width: 2px;
  height: 32px;
  margin: 0 5px;
  background: #e4e4e4;
`;
const Customize = styled.button`
  width: 24px;
  height: 20px;
  margin-left: 20px;
  display: flex;
  flex-direction: column;
  align-items: center;
  justify-content: center;
  gap: 3px;
  &::before { content: ''; width: 18px; height: 2px; background: #111; }
`;
const WindowTitle = styled.h1`
  margin: 0;
  font-size: 20px;
  font-weight: 400;
  line-height: 28px;
  color: #dedede;
  white-space: nowrap;
`;
const WindowControls = styled.div<{ $lift: number; $inset: number }>`
  display: flex;
  flex: 1 1 ${(p) => p.$inset}px;
  justify-content: flex-end;
  align-items: center;
  padding: 0 1px ${(p) => p.$lift}px 0;
`;
const WinButton = styled.button<{ $w: number }>`
  display: grid;
  place-items: center;
  width: ${(p) => p.$w}px;
  height: 26px;
`;
const TabRow = styled.div`
  display: flex;
  align-items: flex-end;
  justify-content: space-between;
  flex: 1;
  margin-left: 6px;
`;
const Tabs = styled.nav`
  display: flex;
  gap: 6px;
`;
const Tab = styled.button<{ $active?: boolean }>`
  width: 80px;
  height: 37px;
  padding-top: 3px;
  color: #dcdcdc;
  ${(p) => p.$active && css`
    color: #111;
    margin-bottom: -2px;
    height: 39px;
    background: linear-gradient(#cfcfcd, #c8c8c9);
    border-radius: 4px 4px 0 0;
  `}
`;

/* ---------- ribbon ---------- */

const Ribbon = styled.div`
  display: flex;
  height: 147px;
  padding: 3px 0 4px;
  background: linear-gradient(#c9c9cb, #c4c4c2 25%, #bbbbbd 58%, #b2b2b2 75%, #a2a2a0);
  border-bottom: 1px solid #707070;
`;
const Group = styled.section<{ $w: number }>`
  display: flex;
  flex-direction: column;
  flex: 0 0 ${(p) => p.$w}px;
  border-right: 1px solid #7a7a7a;
  box-shadow: 1px 0 #cfcfcf;
`;
const GroupBody = styled.div<{ $pad: number }>`
  display: flex;
  height: 114px;
  margin-top: 4px;
  padding-left: ${(p) => p.$pad}px;
`;
const GroupLabel = styled.h2`
  margin: 0;
  font-size: 19px;
  font-weight: 400;
  line-height: 20px;
  text-align: center;
  color: #333;
  white-space: nowrap;
`;
const Column = styled.div<{ $gap?: number }>`
  display: flex;
  flex-direction: column;
  margin-left: ${(p) => p.$gap || 0}px;
`;
const CellBox = styled.div<{ $on?: boolean }>`
  display: flex;
  height: 38px;
  min-width: 38px;
  border: 1px solid transparent;
  border-radius: 4px;
  ${(p) => p.$on && css`
    background: linear-gradient(#fbe49b, #f7d978 50%, #fdee94);
    border-color: #b98f38;
  `}
`;
const CellButton = styled.button`
  display: grid;
  place-items: center;
  width: 36px;
  height: 36px;
`;
const CellArrow = styled.button<{ $on?: boolean }>`
  display: grid;
  place-items: center;
  width: 18px;
  height: 36px;
  border-left: ${(p) => (p.$on ? '1px solid #b98f38' : '0')};
`;
const LightLine = styled.span`
  width: 2px;
  height: 106px;
  margin: 3px 4px 0;
  background: #e6e6e8;
`;
const BigButton = styled.button<{ $w: number; $on?: boolean }>`
  display: flex;
  flex-direction: column;
  align-items: center;
  width: ${(p) => p.$w}px;
  height: 114px;
  border: 1px solid transparent;
  border-radius: 4px;
  white-space: nowrap;
  ${(p) => p.$on && css`
    background: linear-gradient(#e3cf8e, #dcc67c 60%, #e9dc8c);
    border-color: #b59a54;
  `}
`;
const BigArt = styled.span<{ $short?: boolean }>`
  display: grid;
  place-items: center;
  flex: 0 0 ${(p) => (p.$short ? 66 : 74)}px;
  padding-bottom: ${(p) => (p.$short ? 18 : 26)}px;
`;
const BigCaption = styled.span`
  flex: 0 0 28px;
`;
const TextRows = styled.div`
  display: flex;
  flex-direction: column;
`;
const TextCommand = styled.button`
  display: flex;
  align-items: center;
  gap: 5px;
  height: 30px;
  white-space: nowrap;
`;
const Framed = styled.span<{ $green?: boolean }>`
  display: grid;
  place-items: center;
  width: 41px;
  height: 41px;
  border: 1px solid #999;
  border-radius: 5px;
  ${(p) => p.$green && css`
    background: linear-gradient(#96dba6, #6fd860 40%, #3f9a2e 52%, #4aa038 80%, #9be6a0);
    border: 2px solid #23582a;
  `}
`;

type Cell = { i: string; n: string; a?: boolean; on?: boolean };
const c = (i: string, n: string, f = ''): Cell => ({ i, n, a: f.includes('a'), on: f.includes('o') });

const Cells = ({ cols, gap }: { cols: Cell[][]; gap?: number }) => (
  <>
    {cols.map((col, k) => (
      <Column key={k} $gap={k === 0 ? gap : 0}>
        {col.map((cell) => (
          <CellBox key={cell.i} $on={cell.on}>
            <CellButton aria-label={cell.n}><Icon name={cell.i} w={22} h={22} /></CellButton>
            {cell.a && <CellArrow $on={cell.on} aria-label={`${cell.n}选项`}><Triangle /></CellArrow>}
          </CellBox>
        ))}
      </Column>
    ))}
  </>
);

const Big = ({ icon, label, w, on, arrow, iw = 38, ih = 42, children, short }: {
  icon?: string; label: string; w: number; on?: boolean; arrow?: boolean; iw?: number; ih?: number; children?: ReactNode; short?: boolean;
}) => (
  <BigButton $w={w} $on={on}>
    <BigArt $short={short}>{children || <Icon name={icon || ''} w={iw} h={ih} />}</BigArt>
    <BigCaption>{label}</BigCaption>
    {arrow && <Triangle />}
  </BigButton>
);

const RibbonBar = () => (
  <Ribbon>
    <Group $w={118}>
      <GroupBody $pad={8}>
        <Big icon="paste" label="粘贴" w={62} arrow iw={38} ih={40} />
        <Cells gap={3} cols={[[c('cut', '剪切'), c('copy', '复制')]]} />
      </GroupBody>
      <GroupLabel>剪贴板</GroupLabel>
    </Group>
    <Group $w={141}>
      <GroupBody $pad={9}>
        <Big icon="pointer" label="选择" w={69} on iw={26} ih={38} />
        <Cells gap={0} cols={[[c('selBox', '框选'), c('selPlane', '选择平面', 'a'), c('selStack', '重叠选择', 'ao')]]} />
      </GroupBody>
      <GroupLabel>选择</GroupLabel>
    </Group>
    <Group $w={91}>
      <GroupBody $pad={8}>
        <Cells cols={[[c('hole', '孔'), c('ring', '环'), c('gridDots', '矩形阵列')], [c('ringDots', '圆形阵列')]]} />
      </GroupBody>
      <GroupLabel>特征</GroupLabel>
    </Group>
    <Group $w={588}>
      <GroupBody $pad={4}>
        <Big icon="line" label="直线" w={80} arrow iw={34} ih={34} />
        <Big icon="circle" label="中心和点画圆" w={115} arrow iw={40} ih={40} />
        <Cells gap={2} cols={[
          [c('rect', '矩形', 'a'), c('fillet', '圆角', 'a'), c('arc', '圆弧', 'a')],
          [c('curve', '曲线', 'a'), c('trim', '修剪', 'a'), c('extend', '延伸', 'a')],
          [c('offset', '偏置', 'a'), c('move', '移动', 'a'), c('mirror', '镜像', 'a')],
        ]} />
        <LightLine />
        <Cells cols={[
          [c('project', '投影'), c('stretch', '拉伸'), c('dashEdit', '构造')],
          [c('include', '包含'), c('morph', '变形'), c('hatch', '填充')],
          [c('selSketch', '草图选择'), c('relBox', '关系', 'o'), c('rotateGray', '旋转')],
        ]} />
        <LightLine />
        <Cells cols={[
          [c('gridPlay', '网格'), c('gridPick', '网格捕捉'), c('xy', '坐标')],
          [c('originPick', '原点选择'), c('origin', '原点'), c('gridEdit', '网格选项')],
        ]} />
      </GroupBody>
      <GroupLabel>绘图</GroupLabel>
    </Group>
    <Group $w={215}>
      <GroupBody $pad={9}>
        <Cells cols={[
          [c('connect', '连接'), c('horiz', '水平/竖直'), c('tangent', '相切')],
          [c('parallel', '平行'), c('equal', '相等'), c('symm', '对称')],
          [c('concentric', '同心'), c('perp', '垂直'), c('collinear', '共线')],
          [c('lock', '锁定'), c('rigid', '刚性集'), c('symmAxis', '对称轴')],
        ]} />
        <LightLine />
        <Cells cols={[[c('keepRel', '保持关系', 'o'), c('handles', '关系手柄', 'o'), c('conflict', '关系助手')]]} />
      </GroupBody>
      <GroupLabel>相关</GroupLabel>
    </Group>
    <Group $w={54}>
      <GroupBody $pad={9}>
        <Cells cols={[[c('bulbEdit', '智能草图选项'), c('overlap', '重叠', 'o'), c('target', '对齐', 'o')]]} />
      </GroupBody>
      <GroupLabel>智...</GroupLabel>
    </Group>
    <Group $w={319}>
      <GroupBody $pad={12}>
        <Big icon="smartDim" label="智能尺寸" w={78} iw={42} ih={42} />
        <Cells gap={4} cols={[
          [c('hdim', '间距'), c('adim', '夹角'), c('coord', '坐标尺寸', 'a')],
          [c('multi', '角坐标'), c('depth', '对称直径'), c('xdist', '尺寸轴')],
          [c('dimEdit', '编辑尺寸'), c('dimSel', '选择尺寸'), c('pane', '自动尺寸', 'o')],
          [c('delDim', '删除尺寸')],
        ]} />
        <LightLine />
        <Cells cols={[[c('fontAA', '字体'), c('fontUp', '增大字号'), c('fontDown', '减小字号')]]} />
      </GroupBody>
      <GroupLabel>尺寸</GroupLabel>
    </Group>
    <Group $w={167}>
      <GroupBody $pad={8}>
        <Cells cols={[
          [c('leader', '标注'), c('balloon', '零件序号'), c('surface', '表面纹理')],
          [c('weldSym', '焊接符号'), c('edgeCond', '边条件'), c('fcf', '形位公差')],
          [c('datum', '基准框'), c('a1', '基准目标'), c('callout', '引线')],
          [c('connector', '连接线'), c('textA', '文本')],
        ]} />
      </GroupBody>
      <GroupLabel>注释</GroupLabel>
    </Group>
    <Group $w={132}>
      <GroupBody $pad={13}>
        <TextRows>
          <TextCommand><Icon name="updAll" w={22} h={22} />全部更新</TextCommand>
          <TextCommand><Icon name="cvtAll" w={22} h={22} />全部转换</TextCommand>
        </TextRows>
      </GroupBody>
      <GroupLabel>属性文本</GroupLabel>
    </Group>
    <Group $w={101}>
      <GroupBody $pad={8}>
        <Cells cols={[[c('front', '置于顶层'), c('back', '置于底层')]]} />
        <LightLine />
        <Cells cols={[[c('forward', '上移一层'), c('backward', '下移一层')]]} />
      </GroupBody>
      <GroupLabel>排列</GroupLabel>
    </Group>
    <Group $w={85}>
      <GroupBody $pad={2}><Big icon="block" label="块" w={82} arrow iw={40} ih={42} /></GroupBody>
      <GroupLabel>块</GroupLabel>
    </Group>
    <Group $w={69}>
      <GroupBody $pad={0}>
        <Big label="样式" w={68} arrow short><Framed><Icon name="styles" w={22} h={22} /></Framed></Big>
      </GroupBody>
    </Group>
    <Group $w={102}>
      <GroupBody $pad={0}>
        <Big label="关闭草图" w={102}><Framed $green><Icon name="check" w={24} h={22} /></Framed></Big>
      </GroupBody>
      <GroupLabel>关闭</GroupLabel>
    </Group>
  </Ribbon>
);

/* ---------- shortcut strip ---------- */

const Strip = styled.div`
  display: flex;
  height: 41px;
  padding-left: 827px;
  border-top: 4px solid #6a6a6a;
  background: #525254;
`;
const ShortcutBar = styled.div`
  display: flex;
  align-items: center;
  gap: 12px;
  flex: 0 0 auto;
  height: 36px;
  padding: 0 10px;
  background: linear-gradient(#c3c3c3, #b8b8b8 50%, #a6a6a6);
`;
const Grip = styled.span`
  width: 4px;
  height: 22px;
  background: repeating-linear-gradient(#444a55 0 4px, transparent 4px 7px);
  margin-right: -6px;
`;
const Shortcut = styled.button`
  display: flex;
  align-items: center;
  gap: 4px;
  white-space: nowrap;
`;
const shortcuts: [string, string][] = [
  ['trim', '修剪'], ['smartDim', '智能尺寸'], ['connect', '连接'], ['horiz', '水平/竖直'], ['rect', '中心创建矩形'],
  ['undo', '撤消'], ['project', '投影到草图'], ['circle', '中心和点画圆'], ['line', '直线'], ['leader', '标注'],
];

/* ---------- workspace ---------- */

const Workspace = styled.div`
  display: flex;
  flex: 1;
`;
const SideBar = styled.aside`
  display: flex;
  flex-direction: column;
  flex: 0 0 40px;
  padding-top: 9px;
  background: #737375;
`;
const SideTab = styled.button`
  display: flex;
  flex-direction: column;
  align-items: center;
  justify-content: flex-start;
  gap: 5px;
  width: 37px;
  height: 238px;
  padding: 6px 0 0;
  background: #cbcbcb;
  border: 1px solid #666;
  border-left: 0;
  border-radius: 0 4px 4px 0;
`;
const SideText = styled.span`
  writing-mode: vertical-rl;
  text-orientation: upright;
  line-height: 22px;
`;
const SideButton = styled.button`
  display: grid;
  place-items: center;
  width: 36px;
  height: 53px;
`;
const MainArea = styled.main`
  display: flex;
  flex-direction: column;
  flex: 1;
`;
const DocBar = styled.div`
  display: flex;
  align-items: flex-end;
  justify-content: space-between;
  height: 41px;
  padding-left: 6px;
  border-bottom: 1px solid #4d4d4d;
`;
const DocTab = styled.button`
  display: flex;
  align-items: center;
  gap: 5px;
  height: 38px;
  margin-bottom: -2px;
  padding: 0 13px 2px 11px;
  background: #cacac8;
  border: 1px solid #606060;
  border-bottom: 0;
  border-radius: 4px 4px 0 0;
  white-space: nowrap;
`;
const DocNav = styled.div`
  display: flex;
  align-items: center;
  gap: 8px;
  padding: 0 6px 10px 0;
`;
const NavButton = styled.button`
  display: grid;
  place-items: center;
  width: 16px;
  height: 20px;
`;
const Frame = styled.div`
  display: flex;
  flex: 1;
  border: 6px solid #c2c2c3;
  border-bottom: 4px solid #a0a0a2;
  border-top-color: #c8c8c8;
`;
const Viewport = styled.div`
  position: relative;
  flex: 1;
  overflow: hidden;
  padding: 11px 0 0 14px;
  background: linear-gradient(#222223, #404040 12%, #6a6a6a 31%, #8d8d8d 50%, #a8a8a8 62%, #c4c4c4 77%, #e2e2e2 88%, #fff);
`;
const Scene = styled.svg`
  position: absolute;
  inset: 0;
  width: 100%;
  height: 100%;
`;
const TreePanel = styled.div`
  position: relative;
  display: flex;
  align-items: flex-start;
  gap: 12px;
`;
const TreeBody = styled.div`
  width: 406px;
`;
const TreeGrip = styled.div`
  display: grid;
  place-items: center;
  height: 14px;
  margin-bottom: 6px;
  background: linear-gradient(#f4f4f4, #c9c9c9);
  border: 1px solid #777;
  &::before {
    content: '';
    width: 50px;
    height: 3px;
    background: repeating-linear-gradient(90deg, #4b78c0 0 3px, transparent 3px 5px);
  }
`;
const AcceptButton = styled.button`
  display: grid;
  place-items: center;
  width: 40px;
  height: 40px;
  border: 1px solid #2f7a34;
  border-radius: 4px;
  background: linear-gradient(#a7e3a0, #6cc860 45%, #358a2a 55%, #5fb850 80%, #a8e8c0);
`;
const Tree = styled.ul`
  margin: 0;
  padding: 0;
  list-style: none;
`;
const TreeRow = styled.li<{ $indent: number }>`
  display: flex;
  align-items: center;
  height: 26px;
  padding-left: ${(p) => p.$indent}px;
`;
const Expander = styled.button`
  flex: 0 0 14px;
  height: 14px;
  margin-right: 12px;
  background: #fff;
  border: 2px solid #7fa05a;
  display: grid;
  place-items: center;
`;
const Tick = styled.input`
  appearance: none;
  flex: 0 0 20px;
  height: 17px;
  margin: 0 10px 0 0;
  background: #fff;
  border: 1px solid #55607c;
  border-bottom-width: 2px;
  display: grid;
  place-items: center;
  &:checked::before {
    content: '';
    width: 6px;
    height: 11px;
    margin-top: -4px;
    border: solid #14305f;
    border-width: 0 3px 3px 0;
    transform: rotate(40deg);
  }
`;
const NodeLabel = styled.label<{ $bold?: boolean; $dim?: boolean }>`
  display: flex;
  align-items: center;
  gap: 7px;
  height: 23px;
  padding: 0 9px 0 1px;
  background: linear-gradient(#fff, #e6eaec);
  border: 1px solid #b5c2c8;
  font-size: ${(p) => (p.$bold ? 22 : 20)}px;
  font-weight: ${(p) => (p.$bold ? 700 : 400)};
  line-height: 21px;
  color: ${(p) => (p.$dim ? '#777' : '#111')};
  white-space: nowrap;
`;
const RootLabel = styled(NodeLabel)`
  margin-left: 8px;
  gap: 5px;
  & svg:first-child { margin-right: 3px; }
`;
const GroupNode = styled.div`
  display: flex;
  align-items: center;
  flex: 0 0 298px;
  height: 24px;
  padding: 0 18px 0 7px;
  gap: 2px;
  background: linear-gradient(#e8a64c, #f6cf8e 18%, #e59a34 50%, #f3c74a 78%, #f8e05c);
  border: 1px solid #c89040;
  font-size: 22px;
  font-weight: 700;
  line-height: 22px;
  & svg:last-child { margin-left: auto; }
`;

type Node = { id: string; icon: string; text: string; lvl: 1 | 2; exp?: string; chk?: boolean; bold?: boolean; dim?: boolean };
const n2 = (icon: string, text: string, chk?: boolean, active = false): Node => ({ id: text, icon, text, lvl: 2, chk, bold: true, dim: !active });
const topNodes: Node[] = [
  { id: 'base', icon: 'axes', text: 'Base', lvl: 1, chk: true },
  { id: 'mat', icon: 'material', text: '材料', lvl: 1 },
  { id: 'ref', icon: 'plane', text: '基本参考平面', lvl: 1, exp: '+', chk: false, dim: true },
  { id: 'body', icon: 'body', text: '设计体', lvl: 1, exp: '+', chk: false, dim: true },
];
const features: Node[] = [
  n2('extrude', '拉伸 1'), n2('tableCurve', '制表曲线 1', false), n2('sketch', '草图 1', false), n2('refPlane', '平面 4', false),
  n2('mirrorFeat', '镜像 1', false), n2('sketch', '草图 2', false), n2('cutFeat', '除料 1'), n2('round', '倒圆 1'), n2('pattern', '阵列 1'),
  n2('sketch', '草图 8', false), n2('sketch', '草图 9', false), n2('revolve', '拉伸 3'), n2('cutFeat', '除料 2'), n2('round', '倒圆 3'),
  n2('axes', '坐标系 6', true, true), n2('sketch3d', '3D 草图 8', true, true), n2('sketch', '草图 13', true, true),
];

const PlusMinus = ({ minus }: { minus?: boolean }) => (
  <svg width="8" height="8" viewBox="0 0 8 8" aria-hidden="true"><path d={minus ? 'M0 4h8' : 'M0 4h8M4 0v8'} stroke="#222" strokeWidth="2" /></svg>
);

const TreeItem = ({ node }: { node: Node }) => {
  const base = node.lvl === 2 ? 90 : 52;
  const indent = node.exp ? base - 26 : node.chk === undefined ? base + 30 : base;
  return (
    <TreeRow $indent={indent}>
      {node.exp && <Expander aria-label="展开"><PlusMinus /></Expander>}
      {node.chk !== undefined && <Tick type="checkbox" id={`n-${node.id}`} defaultChecked={node.chk} />}
      <NodeLabel htmlFor={node.chk !== undefined ? `n-${node.id}` : undefined} $bold={node.bold} $dim={node.dim}>
        <Icon name={node.icon} w={24} h={21} />{node.text}
      </NodeLabel>
    </TreeRow>
  );
};

/* ---------- floating command bar ---------- */

const CommandBar = styled.div`
  position: absolute;
  left: 144px;
  top: 70px;
  display: flex;
  align-items: center;
  height: 65px;
  padding: 0 5px 0 3px;
  background: #c5c5c3;
  border: 1px solid #44597c;
  border-top: 3px solid #b9bcc6;
  border-radius: 3px;
  outline: 1px solid #44597c;
`;
const BarButton = styled.button<{ $kind?: 'main' | 'on' | 'plain'; $gap?: number }>`
  display: grid;
  place-items: center;
  width: ${(p) => (p.$kind === 'main' ? 68 : 51)}px;
  height: ${(p) => (p.$kind === 'main' ? 52 : 46)}px;
  margin-left: ${(p) => p.$gap || 0}px;
  border: 1px solid #9db2d0;
  border-radius: 3px;
  background: linear-gradient(#e4ecf8, #f2f7fc);
  ${(p) => p.$kind === 'main' && css`
    background: linear-gradient(#f4c48a, #f0b878 45%, #e99a44 60%, #f1b25c);
    border-color: #b59a5a;
  `}
  ${(p) => p.$kind === 'on' && css`
    background: linear-gradient(#f4c98c, #f4cf94 70%, #f8e6a0);
    border-color: #a98f60;
  `}
  ${(p) => p.$kind === 'plain' && css`
    background: linear-gradient(#dedede, #f2f2f2);
    border-color: #b5b5b5;
  `}
`;
const SelectWrap = styled.span`
  display: grid;
  align-items: center;
  justify-items: end;
  margin-left: 11px;
  & > * { grid-area: 1 / 1; }
  & > svg { margin-right: 7px; pointer-events: none; }
`;
const FenceSelect = styled.select`
  appearance: none;
  width: 274px;
  height: 30px;
  padding: 0 4px;
  background: #e0e0e0;
  border: 1px solid #b0b0b0;
  border-radius: 0;
`;

const Drawing = () => (
  <Scene viewBox="46 315 2346 1002" preserveAspectRatio="xMidYMid meet" aria-label="草图视图">
    <circle cx="1219" cy="816" r="588" fill="none" stroke="#0c0c0c" strokeWidth="1.300" />
    <path d="M1225 815L1807 807" stroke="#0c0c0c" strokeWidth="1.500" />
    <path d="M1218 816L1686 926" stroke="#2222e8" strokeWidth="1.500" />
    <path d="M1771 816C1800 813 1850 790 1887 762S1958 695 1983 650" fill="none" stroke="#3f3a78" strokeWidth="1.300" />
    <path d="M682 1056L2037 449" stroke="#e0285c" strokeWidth="1.500" />
    <path d="M1756 575l-28 7 4 8zM682 1056l26-6-4-8z" fill="#ee3164" stroke="#ee3164" />
    <path d="M1801 802l12 10M1813 802l-12 10" stroke="#d8286c" strokeWidth="1.500" />
    <text transform="translate(1829 534) rotate(-24)" fontFamily='"Liberation Mono", monospace' fontSize="33" fill="#2b6fe0" stroke="#2b6fe0" strokeWidth=".6">V1789=M * Z</text>

    <g fontFamily='"Liberation Sans", sans-serif' fontSize="18" textAnchor="middle">
      <path d="M1224 815h50" stroke="#5fe03a" strokeWidth="4" />
      <path d="M1271 809l27 7-27 6z" fill="#4fd030" />
      <path d="M1225 816L1300 814" stroke="#0c0c0c" strokeWidth="1.500" />
      <path d="M1218 810V762" stroke="#0a0ae6" strokeWidth="5" />
      <path d="M1212 763l6-23 6 23z" fill="#0a0ae6" />
      <path d="M1211 809h14v14h-14z" fill="#e8304c" />
      <path d="M1215 814h3v3h-3zM1219 817h3v3h-3z" fill="#5a1030" />
      <path d="M1212 809h12" stroke="#e8c83c" strokeWidth="2" />
      <text x="1218" y="728" fill="#1414e0">Z</text>
      <text x="1312" y="822" fill="#5fe03a">Y</text>
      <text x="1218" y="878" fill="#e8302a">X</text>
      <path d="M1218 930v-20" stroke="#e84a3a" strokeWidth="4" />
      <path d="M1212 911l6-23 6 23z" fill="#e0302a" />
      <text x="1218" y="923" fill="#1414e0">Z</text>
      <path d="M1212 935l6-10 6 10-6 7z" fill="#06068a" />
      <path d="M1210 957h-50" stroke="#5fe03a" strokeWidth="4" />
      <path d="M1142 957l24-6v12z" fill="#4fd030" />
      <circle cx="1218" cy="957" r="8" fill="#e8d050" stroke="#9a8420" />
      <path d="M1218 957v-22" stroke="#06065a" strokeWidth="5" />
      <text x="1123" y="963" fill="#5fe03a">Y</text>
    </g>

    <path d="M2098 998h169l7 155h-183z" fill="#d9d9d9" fillOpacity=".8" stroke="#a9a9a9" strokeWidth="1.500" />
    <path d="M2091 1153h183l-15 57h-153z" fill="#cdcdce" fillOpacity=".9" stroke="#a9a9a9" strokeWidth="1.500" />
    <path d="M2182 1038v34" stroke="#e88080" strokeWidth="2" />
    <path d="M2182 1072v34" stroke="#7448c8" strokeWidth="2" />
    <path d="M2102 1108h76" stroke="#9ae896" strokeWidth="2" />
    <path d="M2102 1108l20-3v6z" fill="#9ae896" />
    <g fontFamily='"Liberation Serif", serif' fill="#4f4f4f">
      <text transform="translate(2193 1102) rotate(-90)" fontSize="32">TOP</text>
      <text x="2183" y="1190" fontSize="20" textAnchor="middle">LEFT</text>
    </g>
    <circle cx="2182" cy="1108" r="5" fill="#f4f04a" stroke="#9a9420" />
  </Scene>
);

/* ---------- prompt and status bars ---------- */

const PromptBar = styled.div`
  display: flex;
  height: 49px;
  padding-left: 40px;
  border-top: 12px solid #5c5c5a;
  background: #777775;
`;
const PromptTitle = styled.div`
  display: flex;
  align-items: center;
  gap: 8px;
  flex: 0 0 114px;
  padding: 2px 0 0 6px;
  color: #f4f4f4;
  white-space: nowrap;
  border-top: 1px solid #8a8a8a;
`;
const PromptText = styled.p`
  display: flex;
  align-items: center;
  flex: 1;
  margin: 0;
  padding: 4px 0 0 1px;
  border: 1px solid #9a9a9a;
  border-width: 1px 0 1px 1px;
  background: #fff;
  font-size: 22px;
  line-height: 30px;
  white-space: nowrap;
`;
const Spin = styled.div`
  display: flex;
  flex-direction: column;
  justify-content: space-around;
  align-items: center;
  flex: 0 0 27px;
  background: #ececee;
`;
const PromptTools = styled.div`
  display: flex;
  align-items: center;
  justify-content: space-between;
  flex: 0 0 164px;
  padding: 0 3px 0 9px;
`;
const ToolButton = styled.button`
  display: grid;
  place-items: center;
  width: 24px;
  height: 30px;
`;
const StatusBar = styled.footer`
  display: flex;
  align-items: stretch;
  height: 35px;
  padding-top: 3px;
  border-top: 1px solid #2f2f2f;
  background: linear-gradient(#4b4b4b, #434343 40%, #333);
`;
const StatusText = styled.div`
  display: flex;
  align-items: center;
  flex: 1 1 0;
  margin-left: 1207px;
  padding-left: 9px;
  border-left: 2px solid #dcdcdc;
  color: #cfcfcf;
  white-space: nowrap;
`;
const StatusLine = styled.span<{ $gap?: number }>`
  width: 2px;
  margin-right: ${(p) => p.$gap || 0}px;
  background: #cdcdcd;
`;
const FindInput = styled.input`
  width: 231px;
  padding: 0 4px;
  border: 0;
  border-radius: 0;
  background: #fff;
  &::placeholder { color: #c0c0c0; opacity: 1; }
`;
const StatusTools = styled.div`
  display: flex;
  align-items: center;
  padding: 0 3px 0 1px;
`;
const StatusButton = styled.button<{ $w?: number }>`
  display: grid;
  place-items: center;
  width: ${(p) => p.$w || 37}px;
  height: 30px;
`;
const ZoomBox = styled.div`
  display: flex;
  align-items: center;
  justify-content: space-between;
  width: 194px;
  height: 29px;
  margin: 0 3px 0 5px;
  border: 1px solid #9fb8c8;
`;
const RoundButton = styled.button`
  display: grid;
  place-items: center;
  width: 24px;
  height: 24px;
  border-radius: 12px;
  background: #dfe7f2;
  border: 2px solid #7fa4d4;
`;
const ZoomRange = styled.input`
  appearance: none;
  width: 134px;
  height: 24px;
  margin: 0;
  background: linear-gradient(#aaa, #aaa) center / 100% 2px no-repeat;
  &::-webkit-slider-thumb {
    appearance: none;
    width: 15px;
    height: 22px;
    border: 2px solid #5f8ec4;
    border-radius: 2px 2px 8px 8px;
    background: linear-gradient(90deg, #dfe8f4 40%, #4a6a94 40% 60%, #dfe8f4 60%);
  }
`;
const MouseArrow = styled.svg`
  position: absolute;
  left: 949px;
  top: 116px;
`;

const sideTools: [string, string][] = [
  ['blocks', '零件族'], ['ask', '帮助'], ['scene', '场景'], ['holes', '孔库'], ['corner', '样式'],
  ['joint', '传感器'], ['layers', '图层'], ['nodes', '关系图'], ['gear', '工程参考'], ['chat', '消息'],
];
const viewTools: [string, string][] = [
  ['share', '共享'], ['zoomArea', '窗口缩放'], ['zoom', '缩放'], ['zoomTool', '动态缩放'],
  ['fit', '适合'], ['pan', '平移'], ['viewCube', '视图方向'], ['refresh', '更新视图'],
];

export default function App() {
  return (
    <>
      <GlobalStyle />
      <Shell>
        <Header>
          <LogoCell>
            <LogoButton aria-label="应用程序菜单">
              <svg width="28" height="30" viewBox="0 0 28 30" aria-hidden="true">
                <path d="M25 3c-2 2-9 4-13 10-3 4-5 7-5 11l-3 4 4-3c6-2 9-5 12-10 2-4 3-8 5-12z" fill="#3f9ad8" />
                <path d="M3 28C7 20 14 12 24 5" fill="none" stroke="#174e86" strokeWidth="1.500" />
                <path d="M17 15l5-2M12 20l7-1" stroke="#174e86" />
              </svg>
            </LogoButton>
          </LogoCell>
          <HeaderRows>
            <TitleRow>
              <QuickAccess>
                <QatButton $w={36} aria-label="新建"><Icon name="page" w={20} h={22} /></QatButton>
                <QatButton $w={22} aria-label="新建选项"><Triangle /></QatButton>
                <QatLine />
                <QatButton $w={36} aria-label="打开"><Icon name="open" w={22} h={22} /></QatButton>
                <QatButton $w={36} aria-label="同步"><Icon name="sync" w={18} h={18} /></QatButton>
                <QatLine />
                <QatButton $w={36} aria-label="保存"><Icon name="save" w={22} h={22} /></QatButton>
                <QatButton $w={36} aria-label="另存为"><Icon name="saveAs" w={22} h={22} /></QatButton>
                <QatButton $w={22} aria-label="保存选项"><Triangle /></QatButton>
                <QatLine />
                <QatButton $w={36} aria-label="列表"><Icon name="list" w={22} h={22} /></QatButton>
                <QatButton $w={36} aria-label="图像"><Icon name="image" w={22} h={22} /></QatButton>
                <QatButton $w={14} aria-label="图像选项"><Triangle /></QatButton>
                <QatLine />
                <QatButton $w={36} aria-label="关闭"><Icon name="door" w={22} h={22} /></QatButton>
                <QatLine />
                <QatButton $w={36} aria-label="撤消"><Icon name="undo" w={22} h={22} /></QatButton>
                <QatButton $w={22} aria-label="撤消列表"><Triangle /></QatButton>
                <QatButton $w={36} aria-label="重做"><Icon name="redo" w={22} h={22} /></QatButton>
                <QatButton $w={16} aria-label="重做列表"><Triangle $tone="#999" /></QatButton>
                <QatLine />
                <QatButton $w={36} aria-label="全部重做"><Icon name="redoAll" w={22} h={22} /></QatButton>
                <Customize aria-label="自定义"><Triangle $tone="#111" /></Customize>
              </QuickAccess>
              <WindowTitle>青翼CAD 2022 - 草图 - [齿轮.par: 草图]</WindowTitle>
              <WindowControls $lift={8} $inset={105}>
                <WinButton $w={36} aria-label="最小化"><svg width="18" height="18" viewBox="0 0 18 18"><path d="M1 8h16v6H1z" fill="#eee" stroke="#555" /></svg></WinButton>
                <WinButton $w={36} aria-label="还原"><svg width="20" height="18" viewBox="0 0 20 18"><path d="M8 1h10v10h-4V5H8z" fill="#eee" stroke="#555" /><path d="M2 6h10v11H2zM5 10h4v3H5z" fill="#eee" stroke="#555" fillRule="evenodd" /></svg></WinButton>
                <WinButton $w={36} aria-label="关闭窗口"><svg width="18" height="16" viewBox="0 0 18 16"><path d="M2 1l14 14M16 1L2 15" stroke="#eee" strokeWidth="4" /></svg></WinButton>
              </WindowControls>
            </TitleRow>
            <TabRow>
              <Tabs>
                <Tab $active>主页</Tab>
                <Tab>检查</Tab>
                <Tab>工具</Tab>
                <Tab>视图</Tab>
              </Tabs>
              <WindowControls $lift={4} $inset={113}>
                <WinButton $w={32} aria-label="帮助"><Icon name="help" w={20} h={20} /></WinButton>
                <WinButton $w={28} aria-label="最小化文档"><svg width="12" height="16" viewBox="0 0 12 16"><path d="M1 12h10" stroke="#eee" strokeWidth="3" /></svg></WinButton>
                <WinButton $w={27} aria-label="还原文档"><svg width="14" height="14" viewBox="0 0 14 14"><path d="M4 4V1h9v7h-3M1 5h9v7H1z" fill="none" stroke="#eee" strokeWidth="2" /></svg></WinButton>
                <WinButton $w={26} aria-label="关闭文档"><svg width="14" height="14" viewBox="0 0 14 14"><path d="M1 1l12 12M13 1L1 13" stroke="#949494" strokeWidth="2" /></svg></WinButton>
              </WindowControls>
            </TabRow>
          </HeaderRows>
        </Header>

        <RibbonBar />

        <Strip>
          <ShortcutBar>
            <Grip />
            {shortcuts.map(([icon, label]) => (
              <Shortcut key={label}><Icon name={icon} w={24} h={20} />{label}</Shortcut>
            ))}
          </ShortcutBar>
        </Strip>

        <Workspace>
          <SideBar>
            <SideTab><Icon name="featLib" w={33} h={28} /><SideText>特征库</SideText></SideTab>
            {sideTools.map(([name, label]) => (
              <SideButton key={name} aria-label={label}><Icon name={name} w={32} h={28} /></SideButton>
            ))}
          </SideBar>
          <MainArea>
            <DocBar>
              <DocTab><Icon name="part" w={25} h={25} />齿轮.par: 草图</DocTab>
              <DocNav>
                <NavButton aria-label="上一个"><svg width="10" height="16" viewBox="0 0 10 16"><path d="M8 1v14L2 8z" fill="none" stroke="#eee" strokeWidth="1.500" /></svg></NavButton>
                <NavButton aria-label="下一个"><svg width="10" height="16" viewBox="0 0 10 16"><path d="M2 1v14l6-7z" fill="none" stroke="#eee" strokeWidth="1.500" /></svg></NavButton>
                <NavButton aria-label="文档列表"><svg width="14" height="8" viewBox="0 0 14 8"><path d="M0 0h14L7 8z" fill="#eee" /></svg></NavButton>
              </DocNav>
            </DocBar>
            <Frame>
              <Viewport>
                <Drawing />
                <TreePanel>
                  <TreeBody>
                    <TreeGrip />
                    <Tree>
                      <TreeRow $indent={0}>
                        <RootLabel><Icon name="partSmall" w={22} h={20} /><Icon name="lockKey" w={24} h={21} />齿轮.par</RootLabel>
                      </TreeRow>
                      {topNodes.map((node) => <TreeItem key={node.id} node={node} />)}
                      <TreeRow $indent={26}>
                        <Expander aria-label="折叠"><PlusMinus minus /></Expander>
                        <GroupNode>
                          <Icon name="arrows" w={24} h={22} />顺序建模
                          <svg width="27" height="18" viewBox="0 0 27 18" aria-hidden="true"><path d="M26 1v16L1 9z" fill="#fffbe0" /><path d="M9 8l4 3 3-1 4 0" fill="none" stroke="#444" strokeDasharray="3 2" /></svg>
                        </GroupNode>
                      </TreeRow>
                      {features.map((node) => <TreeItem key={node.id} node={node} />)}
                    </Tree>
                  </TreeBody>
                  <AcceptButton aria-label="接受草图">
                    <svg width="38" height="38" viewBox="0 0 38 38" aria-hidden="true">
                      <path d="M10 18l8 7 12-12" fill="none" stroke="#fff" strokeWidth="5" />
                      <path d="M18 37l3-8 10-10 5 4-9 9z" fill="#f0c04a" stroke="#6b4a12" />
                      <path d="M31 19l3-4 4 3v3l-2 2z" fill="#d81e5c" />
                    </svg>
                  </AcceptButton>
                </TreePanel>
                <CommandBar>
                  <BarButton $kind="main" aria-label="选择"><Icon name="pointer" w={26} h={36} /></BarButton>
                  <BarButton $gap={15} aria-label="选项"><Icon name="form" w={28} h={26} /></BarButton>
                  <SelectWrap>
                    <FenceSelect aria-label="围栏类型" defaultValue="fence"><option value="fence">定向围栏</option></FenceSelect>
                    <svg width="14" height="9" viewBox="0 0 14 9" aria-hidden="true"><path d="M1 1l6 7 6-7" fill="none" stroke="#666" strokeWidth="1.500" /></svg>
                  </SelectWrap>
                  <BarButton $gap={11} aria-label="智能选择"><Icon name="pickBolt" w={26} h={27} /></BarButton>
                  <BarButton $gap={6} $kind="on" aria-label="矩形围栏"><Icon name="fenceRect" w={26} h={24} /></BarButton>
                  <BarButton aria-label="多边形围栏"><Icon name="fencePoly" w={28} h={24} /></BarButton>
                  <BarButton $gap={8} $kind="plain" aria-label="后退"><Icon name="arrowL" w={23} h={22} /></BarButton>
                  <BarButton $kind="plain" aria-label="前进"><Icon name="arrowR" w={23} h={22} /></BarButton>
                  <BarButton $gap={7} $kind="plain" aria-label="确认"><Icon name="okBox" w={26} h={24} /></BarButton>
                  <BarButton $gap={11} $kind="plain" aria-label="取消"><Icon name="xBox" w={26} h={24} /></BarButton>
                </CommandBar>
              </Viewport>
            </Frame>
          </MainArea>
        </Workspace>

        <PromptBar>
          <PromptTitle><Icon name="hint" w={32} h={14} />提示条</PromptTitle>
          <PromptText>单击元素，向右拖动以放入围栏内，向左拖动以放入围栏内或与围栏重叠，或按 Alt 并单击以放置多边形围栏的第一个顶点。按 Esc 以清除显示的关键点。</PromptText>
          <Spin>
            <svg width="10" height="7" viewBox="0 0 10 7" aria-hidden="true"><path d="M1 6l4-5 4 5" fill="none" stroke="#333" strokeWidth="2" /></svg>
            <svg width="10" height="7" viewBox="0 0 10 7" aria-hidden="true"><path d="M1 1l4 5 4-5" fill="none" stroke="#333" strokeWidth="2" /></svg>
          </Spin>
          <PromptTools>
            <ToolButton aria-label="增大字体"><Glyph width="24" height="26" viewBox="0 0 24 26"><text x="9" y="23" fontSize="26" fontFamily='"Liberation Serif", serif' fill="#f2f2f2" textAnchor="middle">A</text><path d="M17 5l3-4 3 4z" fill="#f2f2f2" /></Glyph></ToolButton>
            <ToolButton aria-label="减小字体"><Glyph width="24" height="26" viewBox="0 0 24 26"><text x="9" y="23" fontSize="18" fontFamily='"Liberation Serif", serif' fill="#f2f2f2" textAnchor="middle">A</text><path d="M14 5h6l-3 4z" fill="#f2f2f2" /></Glyph></ToolButton>
            <ToolButton aria-label="折叠"><svg width="14" height="16" viewBox="0 0 14 16"><path d="M1 7l6-5 6 5M1 14l6-5 6 5" fill="none" stroke="#f2f2f2" strokeWidth="2" /></svg></ToolButton>
            <ToolButton aria-label="菜单"><svg width="16" height="16" viewBox="0 0 16 16"><path d="M0 1h16v3H0zM0 7h16l-8 8z" fill="#f2f2f2" /></svg></ToolButton>
            <ToolButton aria-label="固定"><svg width="14" height="20" viewBox="0 0 14 20"><path d="M3 1h7v10H3zM0 11h13M7 11v8" fill="none" stroke="#f2f2f2" strokeWidth="2" /></svg></ToolButton>
            <ToolButton aria-label="关闭提示条"><svg width="14" height="14" viewBox="0 0 14 14"><path d="M1 1l12 12M13 1L1 13" stroke="#f2f2f2" strokeWidth="2.500" /></svg></ToolButton>
          </PromptTools>
        </PromptBar>

        <StatusBar>
          <StatusText>0 项已选定</StatusText>
          <StatusLine $gap={31} />
          <FindInput type="search" placeholder="查找命令" aria-label="查找命令" />
          <StatusTools>
            {viewTools.map(([name, label]) => (
              <StatusButton key={name} aria-label={label}><Icon name={name} w={26} h={24} /></StatusButton>
            ))}
            <ZoomBox>
              <RoundButton aria-label="缩小"><svg width="14" height="14" viewBox="0 0 14 14"><path d="M1 7h12" stroke="#222" strokeWidth="3" /></svg></RoundButton>
              <ZoomRange type="range" defaultValue={55} aria-label="缩放" />
              <RoundButton aria-label="放大"><svg width="14" height="14" viewBox="0 0 14 14"><path d="M1 7h12M7 1v12" stroke="#222" strokeWidth="3" /></svg></RoundButton>
            </ZoomBox>
          </StatusTools>
          <StatusLine />
          <StatusButton aria-label="视频"><Icon name="video" w={24} h={18} /></StatusButton>
          <StatusLine />
          <StatusButton aria-label="录制"><Icon name="record" w={24} h={24} /></StatusButton>
        </StatusBar>
      </Shell>
      <MouseArrow width="18" height="26" viewBox="0 0 18 26" aria-hidden="true">
        <path d="M1 1v20l5-4 3 8 5-2-4-8h7z" fill="#fff" stroke="#444" strokeWidth="1.500" />
      </MouseArrow>
    </>
  );
}
